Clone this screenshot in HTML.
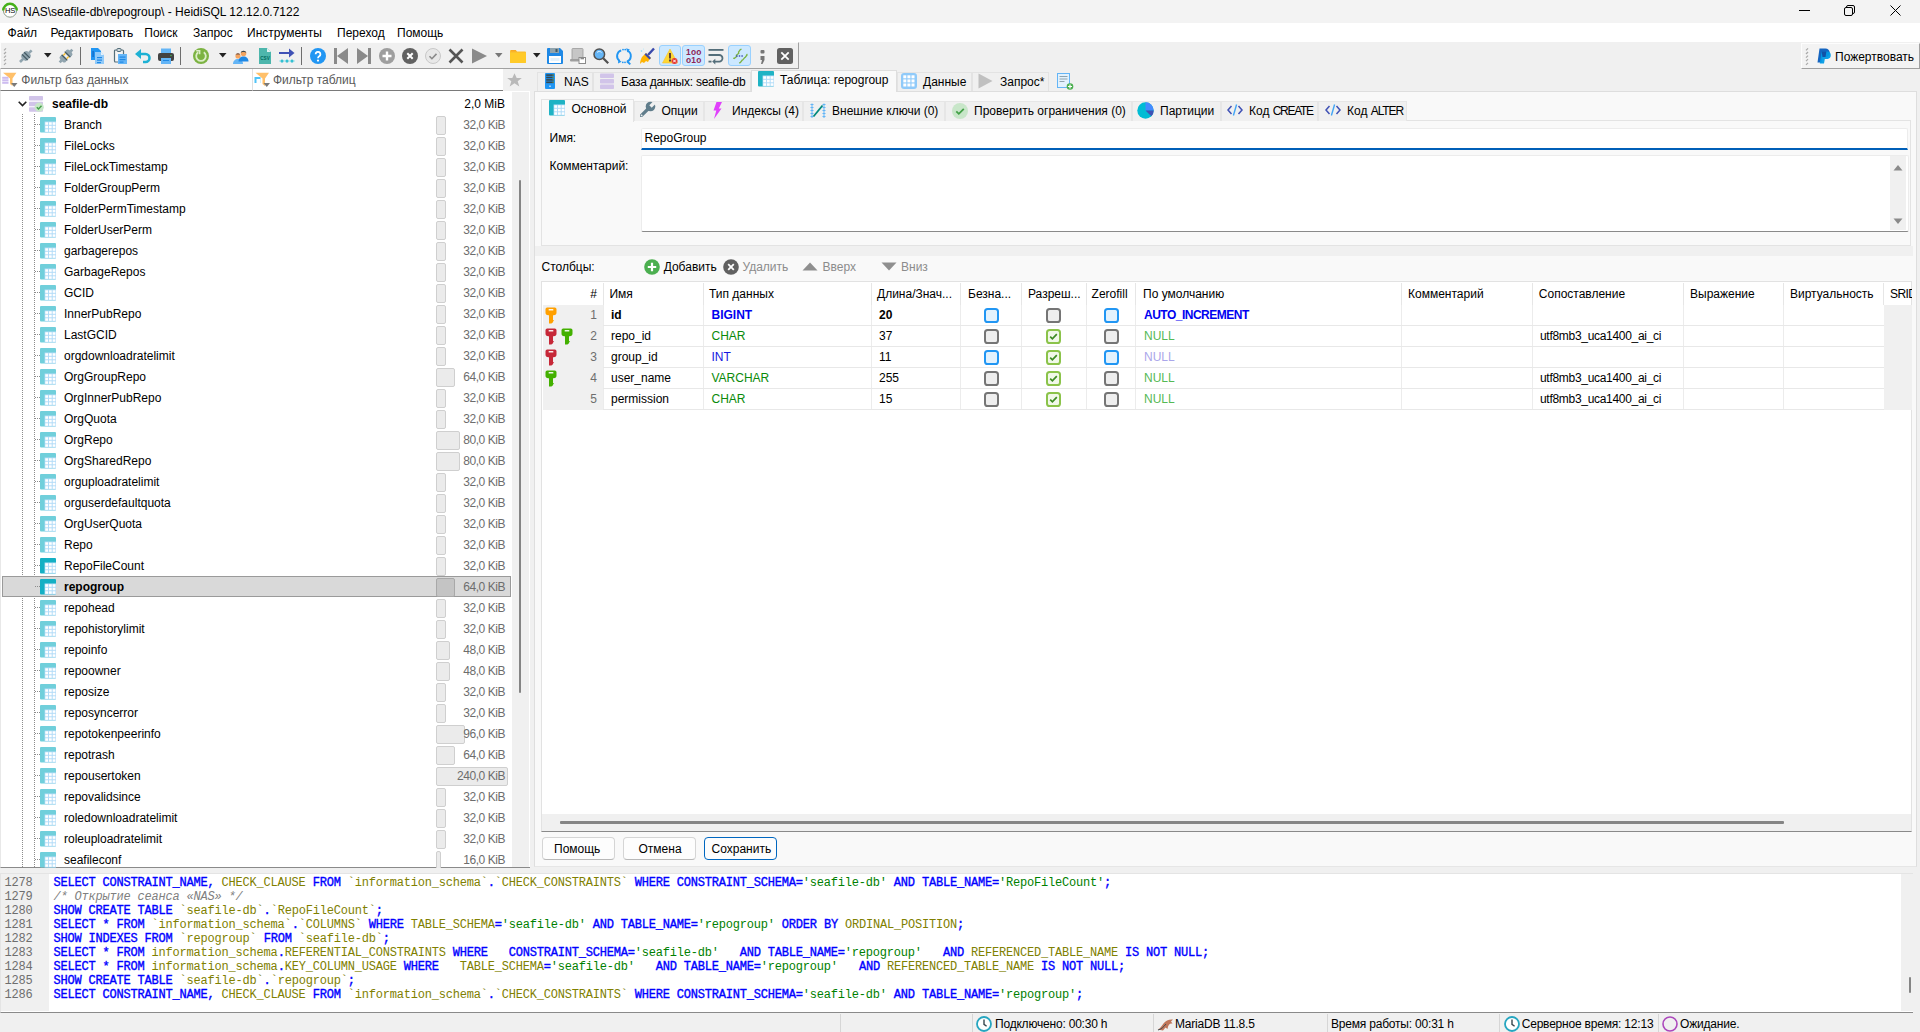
<!DOCTYPE html><html><head><meta charset="utf-8"><style>
*{margin:0;padding:0;box-sizing:border-box}
html,body{width:1920px;height:1032px;overflow:hidden;background:#f0f0f0}
body{position:relative;font-family:"Liberation Sans",sans-serif;font-size:12px;color:#000}
.t{position:absolute;white-space:nowrap;line-height:14px}
.r{position:absolute}
.ic{position:absolute;overflow:visible}
.b{font-weight:bold}
.mono{font-family:"Liberation Mono",monospace;font-size:12px;letter-spacing:-0.2px}
.kw{color:#0000ff;-webkit-text-stroke:0.35px #0000ff}
.id{color:#808000}
.st{color:#008000}
.cm{color:#808080;font-style:italic}
.sz{color:#6d6d6d}
</style></head><body>
<div class="r" style="left:0px;top:0px;width:1920px;height:23px;background:#f3f3f3"></div>
<svg class="ic" style="left:2px;top:3px" width="16" height="16" viewBox="0 0 16 16"><circle cx="8" cy="7.6" r="6.6" fill="#fff" stroke="#8a9a8a" stroke-width="1"/><path d="M1.2 7.6A6.8 6.8 0 0 1 14.8 7.6" fill="none" stroke="#45b018" stroke-width="2.4"/><text x="8" y="10.3" font-size="7.6" font-family="Liberation Sans" fill="#000" text-anchor="middle" letter-spacing="-0.3">HS</text></svg>
<div class="t " style="left:23px;top:5px;">NAS\seafile-db\repogroup\ - HeidiSQL 12.12.0.7122</div>
<div class="r" style="left:1799px;top:10px;width:11px;height:1px;background:#000"></div>
<svg class="ic" style="left:1844px;top:5px" width="11" height="11" viewBox="0 0 11 11"><rect x="0.5" y="2.5" width="8" height="8" rx="1.5" fill="none" stroke="#000"/><path d="M2.5 2.5V2a1.5 1.5 0 0 1 1.5-1.5h5A1.5 1.5 0 0 1 10.5 2v5A1.5 1.5 0 0 1 9 8.5h-.5" fill="none" stroke="#000"/></svg>
<svg class="ic" style="left:1890px;top:5px" width="11" height="11" viewBox="0 0 11 11"><path d="M0.5 0.5L10.5 10.5M10.5 0.5L0.5 10.5" stroke="#000" stroke-width="1"/></svg>
<div class="r" style="left:0px;top:23px;width:1920px;height:19px;background:#fff"></div>
<div class="t " style="left:7.6px;top:26px;">Файл</div>
<div class="t " style="left:50.4px;top:26px;">Редактировать</div>
<div class="t " style="left:144.3px;top:26px;">Поиск</div>
<div class="t " style="left:193px;top:26px;">Запрос</div>
<div class="t " style="left:247px;top:26px;">Инструменты</div>
<div class="t " style="left:337px;top:26px;">Переход</div>
<div class="t " style="left:397px;top:26px;">Помощь</div>
<div class="r" style="left:0px;top:42px;width:799px;height:27px;background:#f0f0f0;border-top:1px solid #fdfdfd;border-left:1px solid #fdfdfd;border-right:1px solid #a0a0a0;border-bottom:1px solid #a0a0a0"></div>
<svg class="ic" style="left:3px;top:47px" width="4" height="19" viewBox="0 0 4 19"><path d="M1 3.4L3 1.4" stroke="#a9a9a9" stroke-width="1.2"/><path d="M1 7.0L3 5.0" stroke="#a9a9a9" stroke-width="1.2"/><path d="M1 10.6L3 8.6" stroke="#a9a9a9" stroke-width="1.2"/><path d="M1 14.200000000000001L3 12.200000000000001" stroke="#a9a9a9" stroke-width="1.2"/><path d="M1 17.8L3 15.8" stroke="#a9a9a9" stroke-width="1.2"/></svg>
<svg class="ic" style="left:18px;top:48px" width="16" height="16" viewBox="0 0 16 16"><g transform="rotate(45 8 8)"><rect x="4" y="3.5" width="8" height="9" rx="3.2" fill="#90a4ae"/><rect x="6.7" y="0" width="2.6" height="4" fill="#90a4ae"/><rect x="6.7" y="12" width="2.6" height="4.5" fill="#90a4ae"/><rect x="4" y="6" width="8" height="1.3" fill="#455a64"/><rect x="4" y="9" width="8" height="1.3" fill="#455a64"/></g></svg>
<svg class="ic" style="left:44px;top:53px" width="8" height="5" viewBox="0 0 8 5"><path d="M0 0H7.5L3.75 4.5Z" fill="#222"/></svg>
<svg class="ic" style="left:58px;top:48px" width="16" height="16" viewBox="0 0 16 16"><g transform="rotate(45 8 8)"><rect x="4" y="1.5" width="8" height="5" rx="2.4" fill="#90a4ae"/><rect x="4" y="9.5" width="8" height="5" rx="2.4" fill="#90a4ae"/><rect x="6.7" y="-1" width="2.6" height="3" fill="#90a4ae"/><rect x="6.7" y="14" width="2.6" height="3" fill="#90a4ae"/><rect x="5" y="6.5" width="1.4" height="3" fill="#fbc02d"/><rect x="9.6" y="6.5" width="1.4" height="3" fill="#fbc02d"/><rect x="4" y="5.2" width="8" height="1.3" fill="#455a64"/><rect x="4" y="9.5" width="8" height="1.3" fill="#455a64"/></g></svg>
<div class="r" style="left:80px;top:47px;width:1px;height:18px;background:#6e6e6e"></div>
<svg class="ic" style="left:90px;top:48px" width="16" height="16" viewBox="0 0 16 16"><path d="M1 0h7l3 3v9H1z" fill="#2196f3"/><path d="M5 4h6l3 3v9H5z" fill="#90caf9"/><path d="M11 4l3 3h-3z" fill="#e3f2fd"/><rect x="7" y="9" width="5" height="1.2" fill="#1e88e5"/><rect x="7" y="11.5" width="5" height="1.2" fill="#1e88e5"/><rect x="7" y="14" width="4" height="1.2" fill="#1e88e5"/><rect x="2.5" y="3" width="1.2" height="6" fill="#1565c0"/></svg>
<svg class="ic" style="left:113px;top:48px" width="16" height="16" viewBox="0 0 16 16"><rect x="1.5" y="2" width="9" height="12" rx="1" fill="#f5f5f5" stroke="#546e7a" stroke-width="1.2"/><rect x="4" y="0.5" width="4" height="3" rx="0.8" fill="#cfd8dc" stroke="#546e7a" stroke-width="1"/><rect x="5" y="6" width="9" height="10" fill="#64b5f6"/><rect x="6.5" y="8.5" width="6" height="1.2" fill="#1e88e5"/><rect x="6.5" y="11" width="6" height="1.2" fill="#1e88e5"/><rect x="6.5" y="13.5" width="4" height="1.2" fill="#1e88e5"/></svg>
<svg class="ic" style="left:135px;top:48px" width="16" height="16" viewBox="0 0 16 16"><path d="M5 6h5.5a4 4 0 0 1 0 8H8" fill="none" stroke="#1eb1d4" stroke-width="2.6"/><path d="M0 6L6 1V11Z" fill="#1eb1d4"/></svg>
<svg class="ic" style="left:158px;top:48px" width="16" height="16" viewBox="0 0 16 16"><rect x="3" y="0.5" width="10" height="5" fill="#64b5f6"/><rect x="0" y="5" width="16" height="8" rx="2" fill="#424242"/><rect x="3" y="10" width="10" height="6" fill="#64b5f6"/><rect x="5" y="12" width="6" height="1" fill="#1e88e5"/><circle cx="13" cy="7.5" r="0.8" fill="#4caf50"/></svg>
<div class="r" style="left:180px;top:47px;width:1px;height:18px;background:#6e6e6e"></div>
<svg class="ic" style="left:193px;top:48px" width="16" height="16" viewBox="0 0 16 16"><circle cx="8" cy="8" r="8" fill="#7cb342"/><path d="M5.2 4.2A4.8 4.8 0 1 0 10.8 4.2" fill="none" stroke="#dcedc8" stroke-width="1.8"/><path d="M3.2 2.8h3.4v3.4" fill="none" stroke="#dcedc8" stroke-width="1.6"/></svg>
<svg class="ic" style="left:218.5px;top:53px" width="8" height="5" viewBox="0 0 8 5"><path d="M0 0H7.5L3.75 4.5Z" fill="#222"/></svg>
<svg class="ic" style="left:233px;top:48px" width="16" height="16" viewBox="0 0 16 16"><circle cx="5" cy="8" r="2.6" fill="#f4a460"/><path d="M4.6 5.2a2.7 2.7 0 0 1 2.6 1.4H2.4a2.7 2.7 0 0 1 2.2-1.4z" fill="#6d4c41"/><path d="M0 16c0-3 2-5 5-5s5 2 5 5z" fill="#64b5f6"/><circle cx="10.5" cy="5.5" r="2.8" fill="#f4a460"/><path d="M7.6 5a3 3 0 0 1 5.8 0c-.8-.8-1.8-1-2.9-1s-2.1.2-2.9 1z" fill="#37474f"/><path d="M5.5 13.5c0-3 2-5 5-5s5 2 5 5z" fill="#1e88e5"/></svg>
<svg class="ic" style="left:258px;top:48px" width="13" height="16" viewBox="0 0 13 16"><path d="M1 0h8l4 4v12H1z" fill="#4db6ac"/><path d="M9 0l4 4H9z" fill="#e0f2f1"/><text x="7" y="12" font-size="4.6" font-weight="bold" font-family="Liberation Sans" fill="#00695c" text-anchor="middle">CSV</text></svg>
<svg class="ic" style="left:279px;top:48px" width="16" height="16" viewBox="0 0 16 16"><rect x="0" y="4" width="12" height="2" fill="#3f51b5"/><path d="M10 0.5L15.5 5L10 9.5Z" fill="#3f51b5"/><circle cx="3" cy="13" r="1.5" fill="#00acc1"/><circle cx="8" cy="13" r="1.5" fill="#00acc1"/><circle cx="13" cy="13" r="1.5" fill="#00acc1"/><rect x="0" y="12.6" width="16" height="0.8" fill="#80deea"/></svg>
<div class="r" style="left:301px;top:47px;width:1px;height:18px;background:#6e6e6e"></div>
<svg class="ic" style="left:310px;top:48px" width="16" height="16" viewBox="0 0 16 16"><circle cx="8" cy="8" r="8" fill="#2196f3"/><path d="M5.6 6.2a2.4 2.4 0 1 1 3.6 2.1c-.8.5-1.2.9-1.2 1.9" fill="none" stroke="#fff" stroke-width="1.8"/><circle cx="8" cy="12.6" r="1.1" fill="#fff"/></svg>
<svg class="ic" style="left:334px;top:48px" width="14" height="16" viewBox="0 0 14 16"><rect x="0" y="0" width="3" height="16" fill="#8a8a8a"/><path d="M14 0V16L3 8Z" fill="#8a8a8a"/></svg>
<svg class="ic" style="left:357px;top:48px" width="14" height="16" viewBox="0 0 14 16"><rect x="11" y="0" width="3" height="16" fill="#8a8a8a"/><path d="M0 0V16L11 8Z" fill="#8a8a8a"/></svg>
<svg class="ic" style="left:379px;top:48px" width="16" height="16" viewBox="0 0 16 16"><circle cx="8" cy="8" r="8" fill="#9e9e9e"/><path d="M8 3.5v9M3.5 8h9" stroke="#fff" stroke-width="2.4"/></svg>
<svg class="ic" style="left:402px;top:48px" width="16" height="16" viewBox="0 0 16 16"><circle cx="8" cy="8" r="8" fill="#616161"/><path d="M5.3 5.3l5.4 5.4M10.7 5.3l-5.4 5.4" stroke="#fff" stroke-width="2"/></svg>
<svg class="ic" style="left:425px;top:48px" width="16" height="16" viewBox="0 0 16 16"><circle cx="8" cy="8" r="7.5" fill="#e8e8e8" stroke="#c8c8c8" stroke-width="1"/><path d="M4.5 8.3l2.4 2.4 4.6-4.8" fill="none" stroke="#8a8a8a" stroke-width="1.6"/></svg>
<svg class="ic" style="left:448px;top:48px" width="16" height="16" viewBox="0 0 16 16"><path d="M1.5 1.5l13 13M14.5 1.5l-13 13" stroke="#555" stroke-width="2.6"/></svg>
<svg class="ic" style="left:472px;top:48px" width="16" height="16" viewBox="0 0 16 16"><path d="M0 0.5L15 8L0 15.5Z" fill="#8a8a8a"/></svg>
<svg class="ic" style="left:495px;top:53px" width="8" height="5" viewBox="0 0 8 5"><path d="M0 0H7.5L3.75 4.5Z" fill="#777"/></svg>
<svg class="ic" style="left:510px;top:48px" width="16" height="16" viewBox="0 0 16 16"><path d="M0 3a1 1 0 0 1 1-1h4.5l1.5 1.5H15a1 1 0 0 1 1 1V14a1 1 0 0 1-1 1H1a1 1 0 0 1-1-1z" fill="#fbc02d"/><path d="M0 5h16v9a1 1 0 0 1-1 1H1a1 1 0 0 1-1-1z" fill="#ffca28"/><path d="M1 2h4.5L7 3.5H1z" fill="#f9a825"/></svg>
<svg class="ic" style="left:533px;top:53px" width="8" height="5" viewBox="0 0 8 5"><path d="M0 0H7.5L3.75 4.5Z" fill="#222"/></svg>
<svg class="ic" style="left:547px;top:48px" width="16" height="16" viewBox="0 0 16 16"><path d="M0 1a1 1 0 0 1 1-1h12l3 3v12a1 1 0 0 1-1 1H1a1 1 0 0 1-1-1z" fill="#1e88e5"/><rect x="3" y="0" width="9" height="5" fill="#90a4ae"/><rect x="8.5" y="1" width="2" height="3" fill="#455a64"/><rect x="2" y="8" width="12" height="7" fill="#fff"/><rect x="3.5" y="10" width="9" height="3" fill="#e3f2fd"/></svg>
<svg class="ic" style="left:570px;top:48px" width="16" height="16" viewBox="0 0 16 16"><rect x="2" y="0.5" width="11" height="12" rx="0.8" fill="#c6c6c6" stroke="#9a9a9a" stroke-width="0.8"/><rect x="0" y="11" width="9" height="2.5" rx="1" fill="#9e9e9e"/><rect x="9" y="9.5" width="6.5" height="6" fill="#fff" stroke="#8a8a8a" stroke-width="1"/><rect x="10.5" y="9.5" width="3.5" height="1.8" fill="#8a8a8a"/></svg>
<svg class="ic" style="left:593px;top:48px" width="16" height="16" viewBox="0 0 16 16"><circle cx="6.3" cy="6.3" r="5.3" fill="#64b5f6" stroke="#505050" stroke-width="1.5"/><path d="M10.2 10.2L15.2 15.2" stroke="#505050" stroke-width="2.2"/><path d="M4 4.5a3 3 0 0 1 4.5 0" stroke="#e3f2fd" stroke-width="1" fill="none"/></svg>
<svg class="ic" style="left:616px;top:48px" width="16" height="16" viewBox="0 0 16 16"><path d="M5.2 2.4A6 6 0 0 0 3.6 13" fill="none" stroke="#2196f3" stroke-width="1.9"/><path d="M11 13.6A6 6 0 0 0 11.8 2.8" fill="none" stroke="#2196f3" stroke-width="1.9"/><circle cx="7" cy="1.6" r="0.9" fill="#2196f3"/><circle cx="9.2" cy="1.6" r="0.9" fill="#2196f3"/><circle cx="6.8" cy="14.3" r="0.9" fill="#2196f3"/><circle cx="9" cy="14.3" r="0.9" fill="#2196f3"/><path d="M10.2 0.2L13.8 1.6 11.2 4.6Z" fill="#2196f3"/><path d="M2 15.6L2.4 11.6 5.6 13.8Z" fill="#2196f3"/><path d="M11 13.2L14.3 16.4" stroke="#2196f3" stroke-width="1.9"/></svg>
<svg class="ic" style="left:639px;top:48px" width="16" height="16" viewBox="0 0 16 16"><path d="M9 7L15 0.5" stroke="#3949ab" stroke-width="2.4"/><path d="M7 5l5 5-2 2-1 2-2-1-2 2-2-1-2 2c0-3 1-5 2-7z" fill="#ffb300"/><path d="M7 5l5 5-1.5 1.5-5-5z" fill="#3949ab"/><circle cx="2.5" cy="3" r="0.8" fill="#81d4fa"/><circle cx="4.5" cy="1" r="0.6" fill="#b3e5fc"/></svg>
<div class="r" style="left:659px;top:45px;width:22px;height:21px;background:#cce8ff;border:1px solid #99d1ff;border-radius:3px"></div>
<svg class="ic" style="left:662px;top:48px" width="16" height="16" viewBox="0 0 16 16"><path d="M8 1L15.5 15H0.5Z" fill="#fdd835" stroke="#fbc02d" stroke-width="0.6" stroke-linejoin="round"/><rect x="7" y="5" width="2" height="5.5" fill="#5d4037"/><rect x="7" y="11.5" width="2" height="2" fill="#5d4037"/><circle cx="12.5" cy="13" r="3" fill="#e53935"/><path d="M11.2 11.7l2.6 2.6M13.8 11.7l-2.6 2.6" stroke="#fff" stroke-width="1"/></svg>
<div class="r" style="left:682px;top:45px;width:23px;height:21px;background:#cce8ff;border:1px solid #99d1ff;border-radius:3px"></div>
<svg class="ic" style="left:685px;top:47px" width="17" height="17" viewBox="0 0 17 17"><text x="8.8" y="8" font-size="8.4" font-weight="bold" font-family="Liberation Sans" fill="#8e2456" text-anchor="middle" letter-spacing="0.2">1oo</text><text x="8.8" y="16.3" font-size="8.4" font-weight="bold" font-family="Liberation Sans" fill="#8e2456" text-anchor="middle" letter-spacing="0.2">o1o</text></svg>
<svg class="ic" style="left:708px;top:48px" width="16" height="16" viewBox="0 0 16 16"><rect x="0.5" y="1" width="15" height="1.8" fill="#546e7a"/><path d="M0.5 7h10.7a3.3 3.3 0 0 1 0 6.6H6" fill="none" stroke="#546e7a" stroke-width="1.8"/><path d="M7.3 10.8L4.2 13.6L7.3 16.4Z" fill="#546e7a"/><rect x="0.5" y="12.7" width="3" height="1.8" fill="#546e7a"/></svg>
<div class="r" style="left:728px;top:45px;width:23px;height:21px;background:#cce8ff;border:1px solid #99d1ff;border-radius:3px"></div>
<svg class="ic" style="left:732px;top:48px" width="16" height="16" viewBox="0 0 16 16"><path d="M9.5 1.2L8.3 1.6 6.5 4.2 6.8 5.2 4.3 7.2 4.6 8.4 2.2 10.5 1.2 10.2" fill="none" stroke="#7cb342" stroke-width="1.3" stroke-linejoin="round"/><path d="M14.8 5.8L15 7 13.2 9.4 12.7 9.6 10.8 11.8 10.3 12 8.3 14.7 7 14.8" fill="none" stroke="#7cb342" stroke-width="1.3" stroke-linejoin="round"/><path d="M4.2 8h1.4M6.8 8h1.4M9.4 8h1.4" stroke="#3f51b5" stroke-width="1.3"/></svg>
<svg class="ic" style="left:760px;top:48px" width="6" height="16" viewBox="0 0 6 16"><rect x="0.5" y="2" width="4" height="3.5" rx="1" fill="#757575"/><path d="M0.5 8h4v4l-2 4h-1.5l1-4h-1.5z" fill="#757575"/></svg>
<svg class="ic" style="left:777px;top:48px" width="16" height="16" viewBox="0 0 16 16"><rect x="0" y="0" width="16" height="16" rx="2.5" fill="#616161"/><path d="M4.3 4.3l7.4 7.4M11.7 4.3l-7.4 7.4" stroke="#fff" stroke-width="1.8"/></svg>
<div class="r" style="left:1801px;top:43px;width:119px;height:26px;background:#f3f3f3;border-top:1px solid #fdfdfd;border-left:1px solid #fdfdfd;border-bottom:1px solid #a0a0a0;border-right:1px solid #a0a0a0"></div>
<svg class="ic" style="left:1805px;top:47px" width="4" height="19" viewBox="0 0 4 19"><path d="M1 3.4L3 1.4" stroke="#a9a9a9" stroke-width="1.2"/><path d="M1 7.0L3 5.0" stroke="#a9a9a9" stroke-width="1.2"/><path d="M1 10.6L3 8.6" stroke="#a9a9a9" stroke-width="1.2"/><path d="M1 14.200000000000001L3 12.200000000000001" stroke="#a9a9a9" stroke-width="1.2"/><path d="M1 17.8L3 15.8" stroke="#a9a9a9" stroke-width="1.2"/></svg>
<svg class="ic" style="left:1815px;top:48px" width="16" height="16" viewBox="0 0 16 16"><path d="M4.5 0.5h6a4 4 0 0 1 0 8.5H7.5L6.6 14.5H2.5z" fill="#1565c0"/><path d="M6.6 3.5h6a3.8 3.8 0 0 1 0 7.5H9.8L9 15.5H4.8z" fill="#039be5" opacity="0.95"/><path d="M6.6 3.5h4.8l-0.9 5.5H7.5z" fill="#1a237e" opacity="0.6"/></svg>
<div class="t " style="left:1835px;top:50px;">Пожертвовать</div>
<div class="r" style="left:0px;top:69px;width:252px;height:22px;background:#fff;border-bottom:1px solid #7a7a7a;border-left:1px solid #e0e0e0"></div>
<div class="r" style="left:252px;top:69px;width:251px;height:22px;background:#fff;border-bottom:1px solid #7a7a7a;border-left:1px solid #e0e0e0"></div>
<svg class="ic" style="left:2px;top:72px" width="16" height="17" viewBox="0 0 16 17"><path d="M1 0.8H14.4L10.5 6.5V14L8 12V6.5Z" fill="#ffc06a"/><rect x="0.2" y="4.8" width="6.3" height="2" fill="#cdbcf0"/><rect x="0.2" y="7.3" width="6.3" height="2" fill="#cdbcf0"/><rect x="0.2" y="9.8" width="6.3" height="2" fill="#cdbcf0"/><path d="M9 11H15.5L12.25 15Z" fill="#7a7a7a"/></svg>
<div class="t " style="left:21.3px;top:73.3px;color:#5a5a5a">Фильтр баз данных</div>
<svg class="ic" style="left:254px;top:72px" width="17" height="17" viewBox="0 0 17 17"><path d="M1.5 0.8H15L11 6.5V14L8.5 12V6.5Z" fill="#ffc06a"/><rect x="0.5" y="5" width="6" height="6" fill="#4fc3f7"/><rect x="2.5" y="7" width="4" height="4" fill="#fff"/><path d="M9.5 11H16L12.75 15Z" fill="#7a7a7a"/></svg>
<div class="t " style="left:273px;top:73.3px;color:#5a5a5a">Фильтр таблиц</div>
<svg class="ic" style="left:507px;top:73px" width="15" height="14" viewBox="0 0 15 14"><path d="M7.5 0.3L9.7 5H14.8L10.7 8.2L12.3 13.5L7.5 10.3L2.7 13.5L4.3 8.2L0.2 5H5.3Z" fill="#b9b9b9"/></svg>
<div class="r" style="left:0px;top:91px;width:530px;height:777px;background:#fff;border-left:1px solid #e8e8e8;border-bottom:1px solid #8a8a8a"></div>
<div class="r" style="left:512px;top:92px;width:17px;height:775px;background:#f0f0f0"></div>
<div class="r" style="left:519px;top:180px;width:2px;height:513px;background:#858585;border-radius:1px"></div>
<svg class="ic" style="left:18px;top:101px" width="9" height="6" viewBox="0 0 9 6"><path d="M0.7 0.7L4.5 4.5L8.3 0.7" fill="none" stroke="#222" stroke-width="1.6"/></svg>
<svg class="ic" style="left:29px;top:96px" width="15" height="16" viewBox="0 0 15 16"><rect x="0" y="0" width="14" height="4.5" rx="0.8" fill="#d1c4e9"/><rect x="0" y="5.8" width="14" height="4.5" rx="0.8" fill="#d1c4e9"/><rect x="0" y="11.3" width="14" height="4.5" rx="0.8" fill="#d1c4e9"/><circle cx="10.2" cy="11.2" r="4.6" fill="#c8e6c9"/><path d="M7.8 11.3l1.7 1.7 3-3.2" fill="none" stroke="#43a047" stroke-width="1.4"/></svg>
<div class="t b" style="left:52px;top:96.5px;">seafile-db</div>
<div class="t " style="left:0px;top:96.5px;left:auto;right:1415px">2,0 MiB</div>
<svg class="ic" style="left:22px;top:114px" width="1" height="753" viewBox="0 0 1 753"><path d="M0.5 0V753" stroke="#8c8c8c" stroke-width="1" stroke-dasharray="1 1"/></svg>
<svg class="ic" style="left:34px;top:114px" width="1" height="753" viewBox="0 0 1 753"><path d="M0.5 0V753" stroke="#8c8c8c" stroke-width="1" stroke-dasharray="1 1"/></svg>
<svg class="ic" style="left:35px;top:124px" width="5" height="1" viewBox="0 0 5 1"><path d="M0 0.5H5" stroke="#8c8c8c" stroke-dasharray="1 1"/></svg>
<svg class="ic" style="left:40px;top:117px" width="16" height="16" viewBox="0 0 16 16"><rect x="0" y="0" width="16" height="15.5" rx="1" fill="#70cfdb"/><rect x="4.6" y="4.5" width="11.4" height="11" fill="#b3dcf8"/><rect x="5.3" y="5.3" width="2.7" height="2.5" fill="#fff"/><rect x="9.0" y="5.3" width="2.7" height="2.5" fill="#fff"/><rect x="12.7" y="5.3" width="2.7" height="2.5" fill="#fff"/><rect x="5.3" y="8.8" width="2.7" height="2.5" fill="#fff"/><rect x="9.0" y="8.8" width="2.7" height="2.5" fill="#fff"/><rect x="12.7" y="8.8" width="2.7" height="2.5" fill="#fff"/><rect x="5.3" y="12.3" width="2.7" height="2.5" fill="#fff"/><rect x="9.0" y="12.3" width="2.7" height="2.5" fill="#fff"/><rect x="12.7" y="12.3" width="2.7" height="2.5" fill="#fff"/></svg>
<div class="t " style="left:64px;top:117.80000000000001px;">Branch</div>
<div class="r" style="left:436px;top:116px;width:10px;height:19px;background:#ebebeb;border:1px solid #cfcfcf;border-radius:2px"></div>
<div class="t sz" style="left:0px;top:117.80000000000001px;left:auto;right:1415px;letter-spacing:-0.45px">32,0 KiB</div>
<svg class="ic" style="left:35px;top:145px" width="5" height="1" viewBox="0 0 5 1"><path d="M0 0.5H5" stroke="#8c8c8c" stroke-dasharray="1 1"/></svg>
<svg class="ic" style="left:40px;top:138px" width="16" height="16" viewBox="0 0 16 16"><rect x="0" y="0" width="16" height="15.5" rx="1" fill="#70cfdb"/><rect x="4.6" y="4.5" width="11.4" height="11" fill="#b3dcf8"/><rect x="5.3" y="5.3" width="2.7" height="2.5" fill="#fff"/><rect x="9.0" y="5.3" width="2.7" height="2.5" fill="#fff"/><rect x="12.7" y="5.3" width="2.7" height="2.5" fill="#fff"/><rect x="5.3" y="8.8" width="2.7" height="2.5" fill="#fff"/><rect x="9.0" y="8.8" width="2.7" height="2.5" fill="#fff"/><rect x="12.7" y="8.8" width="2.7" height="2.5" fill="#fff"/><rect x="5.3" y="12.3" width="2.7" height="2.5" fill="#fff"/><rect x="9.0" y="12.3" width="2.7" height="2.5" fill="#fff"/><rect x="12.7" y="12.3" width="2.7" height="2.5" fill="#fff"/></svg>
<div class="t " style="left:64px;top:138.8px;">FileLocks</div>
<div class="r" style="left:436px;top:137px;width:10px;height:19px;background:#ebebeb;border:1px solid #cfcfcf;border-radius:2px"></div>
<div class="t sz" style="left:0px;top:138.8px;left:auto;right:1415px;letter-spacing:-0.45px">32,0 KiB</div>
<svg class="ic" style="left:35px;top:166px" width="5" height="1" viewBox="0 0 5 1"><path d="M0 0.5H5" stroke="#8c8c8c" stroke-dasharray="1 1"/></svg>
<svg class="ic" style="left:40px;top:159px" width="16" height="16" viewBox="0 0 16 16"><rect x="0" y="0" width="16" height="15.5" rx="1" fill="#70cfdb"/><rect x="4.6" y="4.5" width="11.4" height="11" fill="#b3dcf8"/><rect x="5.3" y="5.3" width="2.7" height="2.5" fill="#fff"/><rect x="9.0" y="5.3" width="2.7" height="2.5" fill="#fff"/><rect x="12.7" y="5.3" width="2.7" height="2.5" fill="#fff"/><rect x="5.3" y="8.8" width="2.7" height="2.5" fill="#fff"/><rect x="9.0" y="8.8" width="2.7" height="2.5" fill="#fff"/><rect x="12.7" y="8.8" width="2.7" height="2.5" fill="#fff"/><rect x="5.3" y="12.3" width="2.7" height="2.5" fill="#fff"/><rect x="9.0" y="12.3" width="2.7" height="2.5" fill="#fff"/><rect x="12.7" y="12.3" width="2.7" height="2.5" fill="#fff"/></svg>
<div class="t " style="left:64px;top:159.8px;">FileLockTimestamp</div>
<div class="r" style="left:436px;top:158px;width:10px;height:19px;background:#ebebeb;border:1px solid #cfcfcf;border-radius:2px"></div>
<div class="t sz" style="left:0px;top:159.8px;left:auto;right:1415px;letter-spacing:-0.45px">32,0 KiB</div>
<svg class="ic" style="left:35px;top:187px" width="5" height="1" viewBox="0 0 5 1"><path d="M0 0.5H5" stroke="#8c8c8c" stroke-dasharray="1 1"/></svg>
<svg class="ic" style="left:40px;top:180px" width="16" height="16" viewBox="0 0 16 16"><rect x="0" y="0" width="16" height="15.5" rx="1" fill="#70cfdb"/><rect x="4.6" y="4.5" width="11.4" height="11" fill="#b3dcf8"/><rect x="5.3" y="5.3" width="2.7" height="2.5" fill="#fff"/><rect x="9.0" y="5.3" width="2.7" height="2.5" fill="#fff"/><rect x="12.7" y="5.3" width="2.7" height="2.5" fill="#fff"/><rect x="5.3" y="8.8" width="2.7" height="2.5" fill="#fff"/><rect x="9.0" y="8.8" width="2.7" height="2.5" fill="#fff"/><rect x="12.7" y="8.8" width="2.7" height="2.5" fill="#fff"/><rect x="5.3" y="12.3" width="2.7" height="2.5" fill="#fff"/><rect x="9.0" y="12.3" width="2.7" height="2.5" fill="#fff"/><rect x="12.7" y="12.3" width="2.7" height="2.5" fill="#fff"/></svg>
<div class="t " style="left:64px;top:180.8px;">FolderGroupPerm</div>
<div class="r" style="left:436px;top:179px;width:10px;height:19px;background:#ebebeb;border:1px solid #cfcfcf;border-radius:2px"></div>
<div class="t sz" style="left:0px;top:180.8px;left:auto;right:1415px;letter-spacing:-0.45px">32,0 KiB</div>
<svg class="ic" style="left:35px;top:208px" width="5" height="1" viewBox="0 0 5 1"><path d="M0 0.5H5" stroke="#8c8c8c" stroke-dasharray="1 1"/></svg>
<svg class="ic" style="left:40px;top:201px" width="16" height="16" viewBox="0 0 16 16"><rect x="0" y="0" width="16" height="15.5" rx="1" fill="#70cfdb"/><rect x="4.6" y="4.5" width="11.4" height="11" fill="#b3dcf8"/><rect x="5.3" y="5.3" width="2.7" height="2.5" fill="#fff"/><rect x="9.0" y="5.3" width="2.7" height="2.5" fill="#fff"/><rect x="12.7" y="5.3" width="2.7" height="2.5" fill="#fff"/><rect x="5.3" y="8.8" width="2.7" height="2.5" fill="#fff"/><rect x="9.0" y="8.8" width="2.7" height="2.5" fill="#fff"/><rect x="12.7" y="8.8" width="2.7" height="2.5" fill="#fff"/><rect x="5.3" y="12.3" width="2.7" height="2.5" fill="#fff"/><rect x="9.0" y="12.3" width="2.7" height="2.5" fill="#fff"/><rect x="12.7" y="12.3" width="2.7" height="2.5" fill="#fff"/></svg>
<div class="t " style="left:64px;top:201.8px;">FolderPermTimestamp</div>
<div class="r" style="left:436px;top:200px;width:10px;height:19px;background:#ebebeb;border:1px solid #cfcfcf;border-radius:2px"></div>
<div class="t sz" style="left:0px;top:201.8px;left:auto;right:1415px;letter-spacing:-0.45px">32,0 KiB</div>
<svg class="ic" style="left:35px;top:229px" width="5" height="1" viewBox="0 0 5 1"><path d="M0 0.5H5" stroke="#8c8c8c" stroke-dasharray="1 1"/></svg>
<svg class="ic" style="left:40px;top:222px" width="16" height="16" viewBox="0 0 16 16"><rect x="0" y="0" width="16" height="15.5" rx="1" fill="#70cfdb"/><rect x="4.6" y="4.5" width="11.4" height="11" fill="#b3dcf8"/><rect x="5.3" y="5.3" width="2.7" height="2.5" fill="#fff"/><rect x="9.0" y="5.3" width="2.7" height="2.5" fill="#fff"/><rect x="12.7" y="5.3" width="2.7" height="2.5" fill="#fff"/><rect x="5.3" y="8.8" width="2.7" height="2.5" fill="#fff"/><rect x="9.0" y="8.8" width="2.7" height="2.5" fill="#fff"/><rect x="12.7" y="8.8" width="2.7" height="2.5" fill="#fff"/><rect x="5.3" y="12.3" width="2.7" height="2.5" fill="#fff"/><rect x="9.0" y="12.3" width="2.7" height="2.5" fill="#fff"/><rect x="12.7" y="12.3" width="2.7" height="2.5" fill="#fff"/></svg>
<div class="t " style="left:64px;top:222.8px;">FolderUserPerm</div>
<div class="r" style="left:436px;top:221px;width:10px;height:19px;background:#ebebeb;border:1px solid #cfcfcf;border-radius:2px"></div>
<div class="t sz" style="left:0px;top:222.8px;left:auto;right:1415px;letter-spacing:-0.45px">32,0 KiB</div>
<svg class="ic" style="left:35px;top:250px" width="5" height="1" viewBox="0 0 5 1"><path d="M0 0.5H5" stroke="#8c8c8c" stroke-dasharray="1 1"/></svg>
<svg class="ic" style="left:40px;top:243px" width="16" height="16" viewBox="0 0 16 16"><rect x="0" y="0" width="16" height="15.5" rx="1" fill="#70cfdb"/><rect x="4.6" y="4.5" width="11.4" height="11" fill="#b3dcf8"/><rect x="5.3" y="5.3" width="2.7" height="2.5" fill="#fff"/><rect x="9.0" y="5.3" width="2.7" height="2.5" fill="#fff"/><rect x="12.7" y="5.3" width="2.7" height="2.5" fill="#fff"/><rect x="5.3" y="8.8" width="2.7" height="2.5" fill="#fff"/><rect x="9.0" y="8.8" width="2.7" height="2.5" fill="#fff"/><rect x="12.7" y="8.8" width="2.7" height="2.5" fill="#fff"/><rect x="5.3" y="12.3" width="2.7" height="2.5" fill="#fff"/><rect x="9.0" y="12.3" width="2.7" height="2.5" fill="#fff"/><rect x="12.7" y="12.3" width="2.7" height="2.5" fill="#fff"/></svg>
<div class="t " style="left:64px;top:243.8px;">garbagerepos</div>
<div class="r" style="left:436px;top:242px;width:10px;height:19px;background:#ebebeb;border:1px solid #cfcfcf;border-radius:2px"></div>
<div class="t sz" style="left:0px;top:243.8px;left:auto;right:1415px;letter-spacing:-0.45px">32,0 KiB</div>
<svg class="ic" style="left:35px;top:271px" width="5" height="1" viewBox="0 0 5 1"><path d="M0 0.5H5" stroke="#8c8c8c" stroke-dasharray="1 1"/></svg>
<svg class="ic" style="left:40px;top:264px" width="16" height="16" viewBox="0 0 16 16"><rect x="0" y="0" width="16" height="15.5" rx="1" fill="#70cfdb"/><rect x="4.6" y="4.5" width="11.4" height="11" fill="#b3dcf8"/><rect x="5.3" y="5.3" width="2.7" height="2.5" fill="#fff"/><rect x="9.0" y="5.3" width="2.7" height="2.5" fill="#fff"/><rect x="12.7" y="5.3" width="2.7" height="2.5" fill="#fff"/><rect x="5.3" y="8.8" width="2.7" height="2.5" fill="#fff"/><rect x="9.0" y="8.8" width="2.7" height="2.5" fill="#fff"/><rect x="12.7" y="8.8" width="2.7" height="2.5" fill="#fff"/><rect x="5.3" y="12.3" width="2.7" height="2.5" fill="#fff"/><rect x="9.0" y="12.3" width="2.7" height="2.5" fill="#fff"/><rect x="12.7" y="12.3" width="2.7" height="2.5" fill="#fff"/></svg>
<div class="t " style="left:64px;top:264.8px;">GarbageRepos</div>
<div class="r" style="left:436px;top:263px;width:10px;height:19px;background:#ebebeb;border:1px solid #cfcfcf;border-radius:2px"></div>
<div class="t sz" style="left:0px;top:264.8px;left:auto;right:1415px;letter-spacing:-0.45px">32,0 KiB</div>
<svg class="ic" style="left:35px;top:292px" width="5" height="1" viewBox="0 0 5 1"><path d="M0 0.5H5" stroke="#8c8c8c" stroke-dasharray="1 1"/></svg>
<svg class="ic" style="left:40px;top:285px" width="16" height="16" viewBox="0 0 16 16"><rect x="0" y="0" width="16" height="15.5" rx="1" fill="#70cfdb"/><rect x="4.6" y="4.5" width="11.4" height="11" fill="#b3dcf8"/><rect x="5.3" y="5.3" width="2.7" height="2.5" fill="#fff"/><rect x="9.0" y="5.3" width="2.7" height="2.5" fill="#fff"/><rect x="12.7" y="5.3" width="2.7" height="2.5" fill="#fff"/><rect x="5.3" y="8.8" width="2.7" height="2.5" fill="#fff"/><rect x="9.0" y="8.8" width="2.7" height="2.5" fill="#fff"/><rect x="12.7" y="8.8" width="2.7" height="2.5" fill="#fff"/><rect x="5.3" y="12.3" width="2.7" height="2.5" fill="#fff"/><rect x="9.0" y="12.3" width="2.7" height="2.5" fill="#fff"/><rect x="12.7" y="12.3" width="2.7" height="2.5" fill="#fff"/></svg>
<div class="t " style="left:64px;top:285.8px;">GCID</div>
<div class="r" style="left:436px;top:284px;width:10px;height:19px;background:#ebebeb;border:1px solid #cfcfcf;border-radius:2px"></div>
<div class="t sz" style="left:0px;top:285.8px;left:auto;right:1415px;letter-spacing:-0.45px">32,0 KiB</div>
<svg class="ic" style="left:35px;top:313px" width="5" height="1" viewBox="0 0 5 1"><path d="M0 0.5H5" stroke="#8c8c8c" stroke-dasharray="1 1"/></svg>
<svg class="ic" style="left:40px;top:306px" width="16" height="16" viewBox="0 0 16 16"><rect x="0" y="0" width="16" height="15.5" rx="1" fill="#70cfdb"/><rect x="4.6" y="4.5" width="11.4" height="11" fill="#b3dcf8"/><rect x="5.3" y="5.3" width="2.7" height="2.5" fill="#fff"/><rect x="9.0" y="5.3" width="2.7" height="2.5" fill="#fff"/><rect x="12.7" y="5.3" width="2.7" height="2.5" fill="#fff"/><rect x="5.3" y="8.8" width="2.7" height="2.5" fill="#fff"/><rect x="9.0" y="8.8" width="2.7" height="2.5" fill="#fff"/><rect x="12.7" y="8.8" width="2.7" height="2.5" fill="#fff"/><rect x="5.3" y="12.3" width="2.7" height="2.5" fill="#fff"/><rect x="9.0" y="12.3" width="2.7" height="2.5" fill="#fff"/><rect x="12.7" y="12.3" width="2.7" height="2.5" fill="#fff"/></svg>
<div class="t " style="left:64px;top:306.8px;">InnerPubRepo</div>
<div class="r" style="left:436px;top:305px;width:10px;height:19px;background:#ebebeb;border:1px solid #cfcfcf;border-radius:2px"></div>
<div class="t sz" style="left:0px;top:306.8px;left:auto;right:1415px;letter-spacing:-0.45px">32,0 KiB</div>
<svg class="ic" style="left:35px;top:334px" width="5" height="1" viewBox="0 0 5 1"><path d="M0 0.5H5" stroke="#8c8c8c" stroke-dasharray="1 1"/></svg>
<svg class="ic" style="left:40px;top:327px" width="16" height="16" viewBox="0 0 16 16"><rect x="0" y="0" width="16" height="15.5" rx="1" fill="#70cfdb"/><rect x="4.6" y="4.5" width="11.4" height="11" fill="#b3dcf8"/><rect x="5.3" y="5.3" width="2.7" height="2.5" fill="#fff"/><rect x="9.0" y="5.3" width="2.7" height="2.5" fill="#fff"/><rect x="12.7" y="5.3" width="2.7" height="2.5" fill="#fff"/><rect x="5.3" y="8.8" width="2.7" height="2.5" fill="#fff"/><rect x="9.0" y="8.8" width="2.7" height="2.5" fill="#fff"/><rect x="12.7" y="8.8" width="2.7" height="2.5" fill="#fff"/><rect x="5.3" y="12.3" width="2.7" height="2.5" fill="#fff"/><rect x="9.0" y="12.3" width="2.7" height="2.5" fill="#fff"/><rect x="12.7" y="12.3" width="2.7" height="2.5" fill="#fff"/></svg>
<div class="t " style="left:64px;top:327.8px;">LastGCID</div>
<div class="r" style="left:436px;top:326px;width:10px;height:19px;background:#ebebeb;border:1px solid #cfcfcf;border-radius:2px"></div>
<div class="t sz" style="left:0px;top:327.8px;left:auto;right:1415px;letter-spacing:-0.45px">32,0 KiB</div>
<svg class="ic" style="left:35px;top:355px" width="5" height="1" viewBox="0 0 5 1"><path d="M0 0.5H5" stroke="#8c8c8c" stroke-dasharray="1 1"/></svg>
<svg class="ic" style="left:40px;top:348px" width="16" height="16" viewBox="0 0 16 16"><rect x="0" y="0" width="16" height="15.5" rx="1" fill="#70cfdb"/><rect x="4.6" y="4.5" width="11.4" height="11" fill="#b3dcf8"/><rect x="5.3" y="5.3" width="2.7" height="2.5" fill="#fff"/><rect x="9.0" y="5.3" width="2.7" height="2.5" fill="#fff"/><rect x="12.7" y="5.3" width="2.7" height="2.5" fill="#fff"/><rect x="5.3" y="8.8" width="2.7" height="2.5" fill="#fff"/><rect x="9.0" y="8.8" width="2.7" height="2.5" fill="#fff"/><rect x="12.7" y="8.8" width="2.7" height="2.5" fill="#fff"/><rect x="5.3" y="12.3" width="2.7" height="2.5" fill="#fff"/><rect x="9.0" y="12.3" width="2.7" height="2.5" fill="#fff"/><rect x="12.7" y="12.3" width="2.7" height="2.5" fill="#fff"/></svg>
<div class="t " style="left:64px;top:348.8px;">orgdownloadratelimit</div>
<div class="r" style="left:436px;top:347px;width:10px;height:19px;background:#ebebeb;border:1px solid #cfcfcf;border-radius:2px"></div>
<div class="t sz" style="left:0px;top:348.8px;left:auto;right:1415px;letter-spacing:-0.45px">32,0 KiB</div>
<svg class="ic" style="left:35px;top:376px" width="5" height="1" viewBox="0 0 5 1"><path d="M0 0.5H5" stroke="#8c8c8c" stroke-dasharray="1 1"/></svg>
<svg class="ic" style="left:40px;top:369px" width="16" height="16" viewBox="0 0 16 16"><rect x="0" y="0" width="16" height="15.5" rx="1" fill="#70cfdb"/><rect x="4.6" y="4.5" width="11.4" height="11" fill="#b3dcf8"/><rect x="5.3" y="5.3" width="2.7" height="2.5" fill="#fff"/><rect x="9.0" y="5.3" width="2.7" height="2.5" fill="#fff"/><rect x="12.7" y="5.3" width="2.7" height="2.5" fill="#fff"/><rect x="5.3" y="8.8" width="2.7" height="2.5" fill="#fff"/><rect x="9.0" y="8.8" width="2.7" height="2.5" fill="#fff"/><rect x="12.7" y="8.8" width="2.7" height="2.5" fill="#fff"/><rect x="5.3" y="12.3" width="2.7" height="2.5" fill="#fff"/><rect x="9.0" y="12.3" width="2.7" height="2.5" fill="#fff"/><rect x="12.7" y="12.3" width="2.7" height="2.5" fill="#fff"/></svg>
<div class="t " style="left:64px;top:369.8px;">OrgGroupRepo</div>
<div class="r" style="left:436px;top:368px;width:19px;height:19px;background:#ebebeb;border:1px solid #cfcfcf;border-radius:2px"></div>
<div class="t sz" style="left:0px;top:369.8px;left:auto;right:1415px;letter-spacing:-0.45px">64,0 KiB</div>
<svg class="ic" style="left:35px;top:397px" width="5" height="1" viewBox="0 0 5 1"><path d="M0 0.5H5" stroke="#8c8c8c" stroke-dasharray="1 1"/></svg>
<svg class="ic" style="left:40px;top:390px" width="16" height="16" viewBox="0 0 16 16"><rect x="0" y="0" width="16" height="15.5" rx="1" fill="#70cfdb"/><rect x="4.6" y="4.5" width="11.4" height="11" fill="#b3dcf8"/><rect x="5.3" y="5.3" width="2.7" height="2.5" fill="#fff"/><rect x="9.0" y="5.3" width="2.7" height="2.5" fill="#fff"/><rect x="12.7" y="5.3" width="2.7" height="2.5" fill="#fff"/><rect x="5.3" y="8.8" width="2.7" height="2.5" fill="#fff"/><rect x="9.0" y="8.8" width="2.7" height="2.5" fill="#fff"/><rect x="12.7" y="8.8" width="2.7" height="2.5" fill="#fff"/><rect x="5.3" y="12.3" width="2.7" height="2.5" fill="#fff"/><rect x="9.0" y="12.3" width="2.7" height="2.5" fill="#fff"/><rect x="12.7" y="12.3" width="2.7" height="2.5" fill="#fff"/></svg>
<div class="t " style="left:64px;top:390.8px;">OrgInnerPubRepo</div>
<div class="r" style="left:436px;top:389px;width:10px;height:19px;background:#ebebeb;border:1px solid #cfcfcf;border-radius:2px"></div>
<div class="t sz" style="left:0px;top:390.8px;left:auto;right:1415px;letter-spacing:-0.45px">32,0 KiB</div>
<svg class="ic" style="left:35px;top:418px" width="5" height="1" viewBox="0 0 5 1"><path d="M0 0.5H5" stroke="#8c8c8c" stroke-dasharray="1 1"/></svg>
<svg class="ic" style="left:40px;top:411px" width="16" height="16" viewBox="0 0 16 16"><rect x="0" y="0" width="16" height="15.5" rx="1" fill="#70cfdb"/><rect x="4.6" y="4.5" width="11.4" height="11" fill="#b3dcf8"/><rect x="5.3" y="5.3" width="2.7" height="2.5" fill="#fff"/><rect x="9.0" y="5.3" width="2.7" height="2.5" fill="#fff"/><rect x="12.7" y="5.3" width="2.7" height="2.5" fill="#fff"/><rect x="5.3" y="8.8" width="2.7" height="2.5" fill="#fff"/><rect x="9.0" y="8.8" width="2.7" height="2.5" fill="#fff"/><rect x="12.7" y="8.8" width="2.7" height="2.5" fill="#fff"/><rect x="5.3" y="12.3" width="2.7" height="2.5" fill="#fff"/><rect x="9.0" y="12.3" width="2.7" height="2.5" fill="#fff"/><rect x="12.7" y="12.3" width="2.7" height="2.5" fill="#fff"/></svg>
<div class="t " style="left:64px;top:411.8px;">OrgQuota</div>
<div class="r" style="left:436px;top:410px;width:10px;height:19px;background:#ebebeb;border:1px solid #cfcfcf;border-radius:2px"></div>
<div class="t sz" style="left:0px;top:411.8px;left:auto;right:1415px;letter-spacing:-0.45px">32,0 KiB</div>
<svg class="ic" style="left:35px;top:439px" width="5" height="1" viewBox="0 0 5 1"><path d="M0 0.5H5" stroke="#8c8c8c" stroke-dasharray="1 1"/></svg>
<svg class="ic" style="left:40px;top:432px" width="16" height="16" viewBox="0 0 16 16"><rect x="0" y="0" width="16" height="15.5" rx="1" fill="#70cfdb"/><rect x="4.6" y="4.5" width="11.4" height="11" fill="#b3dcf8"/><rect x="5.3" y="5.3" width="2.7" height="2.5" fill="#fff"/><rect x="9.0" y="5.3" width="2.7" height="2.5" fill="#fff"/><rect x="12.7" y="5.3" width="2.7" height="2.5" fill="#fff"/><rect x="5.3" y="8.8" width="2.7" height="2.5" fill="#fff"/><rect x="9.0" y="8.8" width="2.7" height="2.5" fill="#fff"/><rect x="12.7" y="8.8" width="2.7" height="2.5" fill="#fff"/><rect x="5.3" y="12.3" width="2.7" height="2.5" fill="#fff"/><rect x="9.0" y="12.3" width="2.7" height="2.5" fill="#fff"/><rect x="12.7" y="12.3" width="2.7" height="2.5" fill="#fff"/></svg>
<div class="t " style="left:64px;top:432.8px;">OrgRepo</div>
<div class="r" style="left:436px;top:431px;width:24px;height:19px;background:#ebebeb;border:1px solid #cfcfcf;border-radius:2px"></div>
<div class="t sz" style="left:0px;top:432.8px;left:auto;right:1415px;letter-spacing:-0.45px">80,0 KiB</div>
<svg class="ic" style="left:35px;top:460px" width="5" height="1" viewBox="0 0 5 1"><path d="M0 0.5H5" stroke="#8c8c8c" stroke-dasharray="1 1"/></svg>
<svg class="ic" style="left:40px;top:453px" width="16" height="16" viewBox="0 0 16 16"><rect x="0" y="0" width="16" height="15.5" rx="1" fill="#70cfdb"/><rect x="4.6" y="4.5" width="11.4" height="11" fill="#b3dcf8"/><rect x="5.3" y="5.3" width="2.7" height="2.5" fill="#fff"/><rect x="9.0" y="5.3" width="2.7" height="2.5" fill="#fff"/><rect x="12.7" y="5.3" width="2.7" height="2.5" fill="#fff"/><rect x="5.3" y="8.8" width="2.7" height="2.5" fill="#fff"/><rect x="9.0" y="8.8" width="2.7" height="2.5" fill="#fff"/><rect x="12.7" y="8.8" width="2.7" height="2.5" fill="#fff"/><rect x="5.3" y="12.3" width="2.7" height="2.5" fill="#fff"/><rect x="9.0" y="12.3" width="2.7" height="2.5" fill="#fff"/><rect x="12.7" y="12.3" width="2.7" height="2.5" fill="#fff"/></svg>
<div class="t " style="left:64px;top:453.8px;">OrgSharedRepo</div>
<div class="r" style="left:436px;top:452px;width:24px;height:19px;background:#ebebeb;border:1px solid #cfcfcf;border-radius:2px"></div>
<div class="t sz" style="left:0px;top:453.8px;left:auto;right:1415px;letter-spacing:-0.45px">80,0 KiB</div>
<svg class="ic" style="left:35px;top:481px" width="5" height="1" viewBox="0 0 5 1"><path d="M0 0.5H5" stroke="#8c8c8c" stroke-dasharray="1 1"/></svg>
<svg class="ic" style="left:40px;top:474px" width="16" height="16" viewBox="0 0 16 16"><rect x="0" y="0" width="16" height="15.5" rx="1" fill="#70cfdb"/><rect x="4.6" y="4.5" width="11.4" height="11" fill="#b3dcf8"/><rect x="5.3" y="5.3" width="2.7" height="2.5" fill="#fff"/><rect x="9.0" y="5.3" width="2.7" height="2.5" fill="#fff"/><rect x="12.7" y="5.3" width="2.7" height="2.5" fill="#fff"/><rect x="5.3" y="8.8" width="2.7" height="2.5" fill="#fff"/><rect x="9.0" y="8.8" width="2.7" height="2.5" fill="#fff"/><rect x="12.7" y="8.8" width="2.7" height="2.5" fill="#fff"/><rect x="5.3" y="12.3" width="2.7" height="2.5" fill="#fff"/><rect x="9.0" y="12.3" width="2.7" height="2.5" fill="#fff"/><rect x="12.7" y="12.3" width="2.7" height="2.5" fill="#fff"/></svg>
<div class="t " style="left:64px;top:474.8px;">orguploadratelimit</div>
<div class="r" style="left:436px;top:473px;width:10px;height:19px;background:#ebebeb;border:1px solid #cfcfcf;border-radius:2px"></div>
<div class="t sz" style="left:0px;top:474.8px;left:auto;right:1415px;letter-spacing:-0.45px">32,0 KiB</div>
<svg class="ic" style="left:35px;top:502px" width="5" height="1" viewBox="0 0 5 1"><path d="M0 0.5H5" stroke="#8c8c8c" stroke-dasharray="1 1"/></svg>
<svg class="ic" style="left:40px;top:495px" width="16" height="16" viewBox="0 0 16 16"><rect x="0" y="0" width="16" height="15.5" rx="1" fill="#70cfdb"/><rect x="4.6" y="4.5" width="11.4" height="11" fill="#b3dcf8"/><rect x="5.3" y="5.3" width="2.7" height="2.5" fill="#fff"/><rect x="9.0" y="5.3" width="2.7" height="2.5" fill="#fff"/><rect x="12.7" y="5.3" width="2.7" height="2.5" fill="#fff"/><rect x="5.3" y="8.8" width="2.7" height="2.5" fill="#fff"/><rect x="9.0" y="8.8" width="2.7" height="2.5" fill="#fff"/><rect x="12.7" y="8.8" width="2.7" height="2.5" fill="#fff"/><rect x="5.3" y="12.3" width="2.7" height="2.5" fill="#fff"/><rect x="9.0" y="12.3" width="2.7" height="2.5" fill="#fff"/><rect x="12.7" y="12.3" width="2.7" height="2.5" fill="#fff"/></svg>
<div class="t " style="left:64px;top:495.8px;">orguserdefaultquota</div>
<div class="r" style="left:436px;top:494px;width:10px;height:19px;background:#ebebeb;border:1px solid #cfcfcf;border-radius:2px"></div>
<div class="t sz" style="left:0px;top:495.8px;left:auto;right:1415px;letter-spacing:-0.45px">32,0 KiB</div>
<svg class="ic" style="left:35px;top:523px" width="5" height="1" viewBox="0 0 5 1"><path d="M0 0.5H5" stroke="#8c8c8c" stroke-dasharray="1 1"/></svg>
<svg class="ic" style="left:40px;top:516px" width="16" height="16" viewBox="0 0 16 16"><rect x="0" y="0" width="16" height="15.5" rx="1" fill="#70cfdb"/><rect x="4.6" y="4.5" width="11.4" height="11" fill="#b3dcf8"/><rect x="5.3" y="5.3" width="2.7" height="2.5" fill="#fff"/><rect x="9.0" y="5.3" width="2.7" height="2.5" fill="#fff"/><rect x="12.7" y="5.3" width="2.7" height="2.5" fill="#fff"/><rect x="5.3" y="8.8" width="2.7" height="2.5" fill="#fff"/><rect x="9.0" y="8.8" width="2.7" height="2.5" fill="#fff"/><rect x="12.7" y="8.8" width="2.7" height="2.5" fill="#fff"/><rect x="5.3" y="12.3" width="2.7" height="2.5" fill="#fff"/><rect x="9.0" y="12.3" width="2.7" height="2.5" fill="#fff"/><rect x="12.7" y="12.3" width="2.7" height="2.5" fill="#fff"/></svg>
<div class="t " style="left:64px;top:516.8px;">OrgUserQuota</div>
<div class="r" style="left:436px;top:515px;width:10px;height:19px;background:#ebebeb;border:1px solid #cfcfcf;border-radius:2px"></div>
<div class="t sz" style="left:0px;top:516.8px;left:auto;right:1415px;letter-spacing:-0.45px">32,0 KiB</div>
<svg class="ic" style="left:35px;top:544px" width="5" height="1" viewBox="0 0 5 1"><path d="M0 0.5H5" stroke="#8c8c8c" stroke-dasharray="1 1"/></svg>
<svg class="ic" style="left:40px;top:537px" width="16" height="16" viewBox="0 0 16 16"><rect x="0" y="0" width="16" height="15.5" rx="1" fill="#70cfdb"/><rect x="4.6" y="4.5" width="11.4" height="11" fill="#b3dcf8"/><rect x="5.3" y="5.3" width="2.7" height="2.5" fill="#fff"/><rect x="9.0" y="5.3" width="2.7" height="2.5" fill="#fff"/><rect x="12.7" y="5.3" width="2.7" height="2.5" fill="#fff"/><rect x="5.3" y="8.8" width="2.7" height="2.5" fill="#fff"/><rect x="9.0" y="8.8" width="2.7" height="2.5" fill="#fff"/><rect x="12.7" y="8.8" width="2.7" height="2.5" fill="#fff"/><rect x="5.3" y="12.3" width="2.7" height="2.5" fill="#fff"/><rect x="9.0" y="12.3" width="2.7" height="2.5" fill="#fff"/><rect x="12.7" y="12.3" width="2.7" height="2.5" fill="#fff"/></svg>
<div class="t " style="left:64px;top:537.8px;">Repo</div>
<div class="r" style="left:436px;top:536px;width:10px;height:19px;background:#ebebeb;border:1px solid #cfcfcf;border-radius:2px"></div>
<div class="t sz" style="left:0px;top:537.8px;left:auto;right:1415px;letter-spacing:-0.45px">32,0 KiB</div>
<svg class="ic" style="left:35px;top:565px" width="5" height="1" viewBox="0 0 5 1"><path d="M0 0.5H5" stroke="#8c8c8c" stroke-dasharray="1 1"/></svg>
<svg class="ic" style="left:40px;top:558px" width="16" height="16" viewBox="0 0 16 16"><rect x="0" y="0" width="16" height="15.5" rx="1" fill="#14b0c4"/><rect x="4.6" y="4.5" width="11.4" height="11" fill="#b3dcf8"/><rect x="5.3" y="5.3" width="2.7" height="2.5" fill="#fff"/><rect x="9.0" y="5.3" width="2.7" height="2.5" fill="#fff"/><rect x="12.7" y="5.3" width="2.7" height="2.5" fill="#fff"/><rect x="5.3" y="8.8" width="2.7" height="2.5" fill="#fff"/><rect x="9.0" y="8.8" width="2.7" height="2.5" fill="#fff"/><rect x="12.7" y="8.8" width="2.7" height="2.5" fill="#fff"/><rect x="5.3" y="12.3" width="2.7" height="2.5" fill="#fff"/><rect x="9.0" y="12.3" width="2.7" height="2.5" fill="#fff"/><rect x="12.7" y="12.3" width="2.7" height="2.5" fill="#fff"/></svg>
<div class="t " style="left:64px;top:558.8px;">RepoFileCount</div>
<div class="r" style="left:436px;top:557px;width:10px;height:19px;background:#ebebeb;border:1px solid #cfcfcf;border-radius:2px"></div>
<div class="t sz" style="left:0px;top:558.8px;left:auto;right:1415px;letter-spacing:-0.45px">32,0 KiB</div>
<div class="r" style="left:2px;top:576px;width:509px;height:21px;background:#d9d9d9;border:1px solid #9a9a9a"></div>
<svg class="ic" style="left:35px;top:586px" width="5" height="1" viewBox="0 0 5 1"><path d="M0 0.5H5" stroke="#8c8c8c" stroke-dasharray="1 1"/></svg>
<svg class="ic" style="left:40px;top:579px" width="16" height="16" viewBox="0 0 16 16"><rect x="0" y="0" width="16" height="15.5" rx="1" fill="#14b0c4"/><rect x="4.6" y="4.5" width="11.4" height="11" fill="#b3dcf8"/><rect x="5.3" y="5.3" width="2.7" height="2.5" fill="#fff"/><rect x="9.0" y="5.3" width="2.7" height="2.5" fill="#fff"/><rect x="12.7" y="5.3" width="2.7" height="2.5" fill="#fff"/><rect x="5.3" y="8.8" width="2.7" height="2.5" fill="#fff"/><rect x="9.0" y="8.8" width="2.7" height="2.5" fill="#fff"/><rect x="12.7" y="8.8" width="2.7" height="2.5" fill="#fff"/><rect x="5.3" y="12.3" width="2.7" height="2.5" fill="#fff"/><rect x="9.0" y="12.3" width="2.7" height="2.5" fill="#fff"/><rect x="12.7" y="12.3" width="2.7" height="2.5" fill="#fff"/></svg>
<div class="t b" style="left:64px;top:579.8px;">repogroup</div>
<div class="r" style="left:436px;top:578px;width:19px;height:19px;background:#c4c4c4;border:1px solid #a8a8a8;border-radius:2px"></div>
<div class="t sz" style="left:0px;top:579.8px;left:auto;right:1415px;letter-spacing:-0.45px">64,0 KiB</div>
<svg class="ic" style="left:35px;top:607px" width="5" height="1" viewBox="0 0 5 1"><path d="M0 0.5H5" stroke="#8c8c8c" stroke-dasharray="1 1"/></svg>
<svg class="ic" style="left:40px;top:600px" width="16" height="16" viewBox="0 0 16 16"><rect x="0" y="0" width="16" height="15.5" rx="1" fill="#70cfdb"/><rect x="4.6" y="4.5" width="11.4" height="11" fill="#b3dcf8"/><rect x="5.3" y="5.3" width="2.7" height="2.5" fill="#fff"/><rect x="9.0" y="5.3" width="2.7" height="2.5" fill="#fff"/><rect x="12.7" y="5.3" width="2.7" height="2.5" fill="#fff"/><rect x="5.3" y="8.8" width="2.7" height="2.5" fill="#fff"/><rect x="9.0" y="8.8" width="2.7" height="2.5" fill="#fff"/><rect x="12.7" y="8.8" width="2.7" height="2.5" fill="#fff"/><rect x="5.3" y="12.3" width="2.7" height="2.5" fill="#fff"/><rect x="9.0" y="12.3" width="2.7" height="2.5" fill="#fff"/><rect x="12.7" y="12.3" width="2.7" height="2.5" fill="#fff"/></svg>
<div class="t " style="left:64px;top:600.8px;">repohead</div>
<div class="r" style="left:436px;top:599px;width:10px;height:19px;background:#ebebeb;border:1px solid #cfcfcf;border-radius:2px"></div>
<div class="t sz" style="left:0px;top:600.8px;left:auto;right:1415px;letter-spacing:-0.45px">32,0 KiB</div>
<svg class="ic" style="left:35px;top:628px" width="5" height="1" viewBox="0 0 5 1"><path d="M0 0.5H5" stroke="#8c8c8c" stroke-dasharray="1 1"/></svg>
<svg class="ic" style="left:40px;top:621px" width="16" height="16" viewBox="0 0 16 16"><rect x="0" y="0" width="16" height="15.5" rx="1" fill="#70cfdb"/><rect x="4.6" y="4.5" width="11.4" height="11" fill="#b3dcf8"/><rect x="5.3" y="5.3" width="2.7" height="2.5" fill="#fff"/><rect x="9.0" y="5.3" width="2.7" height="2.5" fill="#fff"/><rect x="12.7" y="5.3" width="2.7" height="2.5" fill="#fff"/><rect x="5.3" y="8.8" width="2.7" height="2.5" fill="#fff"/><rect x="9.0" y="8.8" width="2.7" height="2.5" fill="#fff"/><rect x="12.7" y="8.8" width="2.7" height="2.5" fill="#fff"/><rect x="5.3" y="12.3" width="2.7" height="2.5" fill="#fff"/><rect x="9.0" y="12.3" width="2.7" height="2.5" fill="#fff"/><rect x="12.7" y="12.3" width="2.7" height="2.5" fill="#fff"/></svg>
<div class="t " style="left:64px;top:621.8px;">repohistorylimit</div>
<div class="r" style="left:436px;top:620px;width:10px;height:19px;background:#ebebeb;border:1px solid #cfcfcf;border-radius:2px"></div>
<div class="t sz" style="left:0px;top:621.8px;left:auto;right:1415px;letter-spacing:-0.45px">32,0 KiB</div>
<svg class="ic" style="left:35px;top:649px" width="5" height="1" viewBox="0 0 5 1"><path d="M0 0.5H5" stroke="#8c8c8c" stroke-dasharray="1 1"/></svg>
<svg class="ic" style="left:40px;top:642px" width="16" height="16" viewBox="0 0 16 16"><rect x="0" y="0" width="16" height="15.5" rx="1" fill="#70cfdb"/><rect x="4.6" y="4.5" width="11.4" height="11" fill="#b3dcf8"/><rect x="5.3" y="5.3" width="2.7" height="2.5" fill="#fff"/><rect x="9.0" y="5.3" width="2.7" height="2.5" fill="#fff"/><rect x="12.7" y="5.3" width="2.7" height="2.5" fill="#fff"/><rect x="5.3" y="8.8" width="2.7" height="2.5" fill="#fff"/><rect x="9.0" y="8.8" width="2.7" height="2.5" fill="#fff"/><rect x="12.7" y="8.8" width="2.7" height="2.5" fill="#fff"/><rect x="5.3" y="12.3" width="2.7" height="2.5" fill="#fff"/><rect x="9.0" y="12.3" width="2.7" height="2.5" fill="#fff"/><rect x="12.7" y="12.3" width="2.7" height="2.5" fill="#fff"/></svg>
<div class="t " style="left:64px;top:642.8px;">repoinfo</div>
<div class="r" style="left:436px;top:641px;width:14px;height:19px;background:#ebebeb;border:1px solid #cfcfcf;border-radius:2px"></div>
<div class="t sz" style="left:0px;top:642.8px;left:auto;right:1415px;letter-spacing:-0.45px">48,0 KiB</div>
<svg class="ic" style="left:35px;top:670px" width="5" height="1" viewBox="0 0 5 1"><path d="M0 0.5H5" stroke="#8c8c8c" stroke-dasharray="1 1"/></svg>
<svg class="ic" style="left:40px;top:663px" width="16" height="16" viewBox="0 0 16 16"><rect x="0" y="0" width="16" height="15.5" rx="1" fill="#70cfdb"/><rect x="4.6" y="4.5" width="11.4" height="11" fill="#b3dcf8"/><rect x="5.3" y="5.3" width="2.7" height="2.5" fill="#fff"/><rect x="9.0" y="5.3" width="2.7" height="2.5" fill="#fff"/><rect x="12.7" y="5.3" width="2.7" height="2.5" fill="#fff"/><rect x="5.3" y="8.8" width="2.7" height="2.5" fill="#fff"/><rect x="9.0" y="8.8" width="2.7" height="2.5" fill="#fff"/><rect x="12.7" y="8.8" width="2.7" height="2.5" fill="#fff"/><rect x="5.3" y="12.3" width="2.7" height="2.5" fill="#fff"/><rect x="9.0" y="12.3" width="2.7" height="2.5" fill="#fff"/><rect x="12.7" y="12.3" width="2.7" height="2.5" fill="#fff"/></svg>
<div class="t " style="left:64px;top:663.8px;">repoowner</div>
<div class="r" style="left:436px;top:662px;width:14px;height:19px;background:#ebebeb;border:1px solid #cfcfcf;border-radius:2px"></div>
<div class="t sz" style="left:0px;top:663.8px;left:auto;right:1415px;letter-spacing:-0.45px">48,0 KiB</div>
<svg class="ic" style="left:35px;top:691px" width="5" height="1" viewBox="0 0 5 1"><path d="M0 0.5H5" stroke="#8c8c8c" stroke-dasharray="1 1"/></svg>
<svg class="ic" style="left:40px;top:684px" width="16" height="16" viewBox="0 0 16 16"><rect x="0" y="0" width="16" height="15.5" rx="1" fill="#70cfdb"/><rect x="4.6" y="4.5" width="11.4" height="11" fill="#b3dcf8"/><rect x="5.3" y="5.3" width="2.7" height="2.5" fill="#fff"/><rect x="9.0" y="5.3" width="2.7" height="2.5" fill="#fff"/><rect x="12.7" y="5.3" width="2.7" height="2.5" fill="#fff"/><rect x="5.3" y="8.8" width="2.7" height="2.5" fill="#fff"/><rect x="9.0" y="8.8" width="2.7" height="2.5" fill="#fff"/><rect x="12.7" y="8.8" width="2.7" height="2.5" fill="#fff"/><rect x="5.3" y="12.3" width="2.7" height="2.5" fill="#fff"/><rect x="9.0" y="12.3" width="2.7" height="2.5" fill="#fff"/><rect x="12.7" y="12.3" width="2.7" height="2.5" fill="#fff"/></svg>
<div class="t " style="left:64px;top:684.8px;">reposize</div>
<div class="r" style="left:436px;top:683px;width:10px;height:19px;background:#ebebeb;border:1px solid #cfcfcf;border-radius:2px"></div>
<div class="t sz" style="left:0px;top:684.8px;left:auto;right:1415px;letter-spacing:-0.45px">32,0 KiB</div>
<svg class="ic" style="left:35px;top:712px" width="5" height="1" viewBox="0 0 5 1"><path d="M0 0.5H5" stroke="#8c8c8c" stroke-dasharray="1 1"/></svg>
<svg class="ic" style="left:40px;top:705px" width="16" height="16" viewBox="0 0 16 16"><rect x="0" y="0" width="16" height="15.5" rx="1" fill="#70cfdb"/><rect x="4.6" y="4.5" width="11.4" height="11" fill="#b3dcf8"/><rect x="5.3" y="5.3" width="2.7" height="2.5" fill="#fff"/><rect x="9.0" y="5.3" width="2.7" height="2.5" fill="#fff"/><rect x="12.7" y="5.3" width="2.7" height="2.5" fill="#fff"/><rect x="5.3" y="8.8" width="2.7" height="2.5" fill="#fff"/><rect x="9.0" y="8.8" width="2.7" height="2.5" fill="#fff"/><rect x="12.7" y="8.8" width="2.7" height="2.5" fill="#fff"/><rect x="5.3" y="12.3" width="2.7" height="2.5" fill="#fff"/><rect x="9.0" y="12.3" width="2.7" height="2.5" fill="#fff"/><rect x="12.7" y="12.3" width="2.7" height="2.5" fill="#fff"/></svg>
<div class="t " style="left:64px;top:705.8px;">reposyncerror</div>
<div class="r" style="left:436px;top:704px;width:10px;height:19px;background:#ebebeb;border:1px solid #cfcfcf;border-radius:2px"></div>
<div class="t sz" style="left:0px;top:705.8px;left:auto;right:1415px;letter-spacing:-0.45px">32,0 KiB</div>
<svg class="ic" style="left:35px;top:733px" width="5" height="1" viewBox="0 0 5 1"><path d="M0 0.5H5" stroke="#8c8c8c" stroke-dasharray="1 1"/></svg>
<svg class="ic" style="left:40px;top:726px" width="16" height="16" viewBox="0 0 16 16"><rect x="0" y="0" width="16" height="15.5" rx="1" fill="#70cfdb"/><rect x="4.6" y="4.5" width="11.4" height="11" fill="#b3dcf8"/><rect x="5.3" y="5.3" width="2.7" height="2.5" fill="#fff"/><rect x="9.0" y="5.3" width="2.7" height="2.5" fill="#fff"/><rect x="12.7" y="5.3" width="2.7" height="2.5" fill="#fff"/><rect x="5.3" y="8.8" width="2.7" height="2.5" fill="#fff"/><rect x="9.0" y="8.8" width="2.7" height="2.5" fill="#fff"/><rect x="12.7" y="8.8" width="2.7" height="2.5" fill="#fff"/><rect x="5.3" y="12.3" width="2.7" height="2.5" fill="#fff"/><rect x="9.0" y="12.3" width="2.7" height="2.5" fill="#fff"/><rect x="12.7" y="12.3" width="2.7" height="2.5" fill="#fff"/></svg>
<div class="t " style="left:64px;top:726.8px;">repotokenpeerinfo</div>
<div class="r" style="left:436px;top:725px;width:29px;height:19px;background:#ebebeb;border:1px solid #cfcfcf;border-radius:2px"></div>
<div class="t sz" style="left:0px;top:726.8px;left:auto;right:1415px;letter-spacing:-0.45px">96,0 KiB</div>
<svg class="ic" style="left:35px;top:754px" width="5" height="1" viewBox="0 0 5 1"><path d="M0 0.5H5" stroke="#8c8c8c" stroke-dasharray="1 1"/></svg>
<svg class="ic" style="left:40px;top:747px" width="16" height="16" viewBox="0 0 16 16"><rect x="0" y="0" width="16" height="15.5" rx="1" fill="#70cfdb"/><rect x="4.6" y="4.5" width="11.4" height="11" fill="#b3dcf8"/><rect x="5.3" y="5.3" width="2.7" height="2.5" fill="#fff"/><rect x="9.0" y="5.3" width="2.7" height="2.5" fill="#fff"/><rect x="12.7" y="5.3" width="2.7" height="2.5" fill="#fff"/><rect x="5.3" y="8.8" width="2.7" height="2.5" fill="#fff"/><rect x="9.0" y="8.8" width="2.7" height="2.5" fill="#fff"/><rect x="12.7" y="8.8" width="2.7" height="2.5" fill="#fff"/><rect x="5.3" y="12.3" width="2.7" height="2.5" fill="#fff"/><rect x="9.0" y="12.3" width="2.7" height="2.5" fill="#fff"/><rect x="12.7" y="12.3" width="2.7" height="2.5" fill="#fff"/></svg>
<div class="t " style="left:64px;top:747.8px;">repotrash</div>
<div class="r" style="left:436px;top:746px;width:19px;height:19px;background:#ebebeb;border:1px solid #cfcfcf;border-radius:2px"></div>
<div class="t sz" style="left:0px;top:747.8px;left:auto;right:1415px;letter-spacing:-0.45px">64,0 KiB</div>
<svg class="ic" style="left:35px;top:775px" width="5" height="1" viewBox="0 0 5 1"><path d="M0 0.5H5" stroke="#8c8c8c" stroke-dasharray="1 1"/></svg>
<svg class="ic" style="left:40px;top:768px" width="16" height="16" viewBox="0 0 16 16"><rect x="0" y="0" width="16" height="15.5" rx="1" fill="#70cfdb"/><rect x="4.6" y="4.5" width="11.4" height="11" fill="#b3dcf8"/><rect x="5.3" y="5.3" width="2.7" height="2.5" fill="#fff"/><rect x="9.0" y="5.3" width="2.7" height="2.5" fill="#fff"/><rect x="12.7" y="5.3" width="2.7" height="2.5" fill="#fff"/><rect x="5.3" y="8.8" width="2.7" height="2.5" fill="#fff"/><rect x="9.0" y="8.8" width="2.7" height="2.5" fill="#fff"/><rect x="12.7" y="8.8" width="2.7" height="2.5" fill="#fff"/><rect x="5.3" y="12.3" width="2.7" height="2.5" fill="#fff"/><rect x="9.0" y="12.3" width="2.7" height="2.5" fill="#fff"/><rect x="12.7" y="12.3" width="2.7" height="2.5" fill="#fff"/></svg>
<div class="t " style="left:64px;top:768.8px;">repousertoken</div>
<div class="r" style="left:436px;top:767px;width:72px;height:19px;background:#ebebeb;border:1px solid #cfcfcf;border-radius:2px"></div>
<div class="t sz" style="left:0px;top:768.8px;left:auto;right:1415px;letter-spacing:-0.45px">240,0 KiB</div>
<svg class="ic" style="left:35px;top:796px" width="5" height="1" viewBox="0 0 5 1"><path d="M0 0.5H5" stroke="#8c8c8c" stroke-dasharray="1 1"/></svg>
<svg class="ic" style="left:40px;top:789px" width="16" height="16" viewBox="0 0 16 16"><rect x="0" y="0" width="16" height="15.5" rx="1" fill="#70cfdb"/><rect x="4.6" y="4.5" width="11.4" height="11" fill="#b3dcf8"/><rect x="5.3" y="5.3" width="2.7" height="2.5" fill="#fff"/><rect x="9.0" y="5.3" width="2.7" height="2.5" fill="#fff"/><rect x="12.7" y="5.3" width="2.7" height="2.5" fill="#fff"/><rect x="5.3" y="8.8" width="2.7" height="2.5" fill="#fff"/><rect x="9.0" y="8.8" width="2.7" height="2.5" fill="#fff"/><rect x="12.7" y="8.8" width="2.7" height="2.5" fill="#fff"/><rect x="5.3" y="12.3" width="2.7" height="2.5" fill="#fff"/><rect x="9.0" y="12.3" width="2.7" height="2.5" fill="#fff"/><rect x="12.7" y="12.3" width="2.7" height="2.5" fill="#fff"/></svg>
<div class="t " style="left:64px;top:789.8px;">repovalidsince</div>
<div class="r" style="left:436px;top:788px;width:10px;height:19px;background:#ebebeb;border:1px solid #cfcfcf;border-radius:2px"></div>
<div class="t sz" style="left:0px;top:789.8px;left:auto;right:1415px;letter-spacing:-0.45px">32,0 KiB</div>
<svg class="ic" style="left:35px;top:817px" width="5" height="1" viewBox="0 0 5 1"><path d="M0 0.5H5" stroke="#8c8c8c" stroke-dasharray="1 1"/></svg>
<svg class="ic" style="left:40px;top:810px" width="16" height="16" viewBox="0 0 16 16"><rect x="0" y="0" width="16" height="15.5" rx="1" fill="#70cfdb"/><rect x="4.6" y="4.5" width="11.4" height="11" fill="#b3dcf8"/><rect x="5.3" y="5.3" width="2.7" height="2.5" fill="#fff"/><rect x="9.0" y="5.3" width="2.7" height="2.5" fill="#fff"/><rect x="12.7" y="5.3" width="2.7" height="2.5" fill="#fff"/><rect x="5.3" y="8.8" width="2.7" height="2.5" fill="#fff"/><rect x="9.0" y="8.8" width="2.7" height="2.5" fill="#fff"/><rect x="12.7" y="8.8" width="2.7" height="2.5" fill="#fff"/><rect x="5.3" y="12.3" width="2.7" height="2.5" fill="#fff"/><rect x="9.0" y="12.3" width="2.7" height="2.5" fill="#fff"/><rect x="12.7" y="12.3" width="2.7" height="2.5" fill="#fff"/></svg>
<div class="t " style="left:64px;top:810.8px;">roledownloadratelimit</div>
<div class="r" style="left:436px;top:809px;width:10px;height:19px;background:#ebebeb;border:1px solid #cfcfcf;border-radius:2px"></div>
<div class="t sz" style="left:0px;top:810.8px;left:auto;right:1415px;letter-spacing:-0.45px">32,0 KiB</div>
<svg class="ic" style="left:35px;top:838px" width="5" height="1" viewBox="0 0 5 1"><path d="M0 0.5H5" stroke="#8c8c8c" stroke-dasharray="1 1"/></svg>
<svg class="ic" style="left:40px;top:831px" width="16" height="16" viewBox="0 0 16 16"><rect x="0" y="0" width="16" height="15.5" rx="1" fill="#70cfdb"/><rect x="4.6" y="4.5" width="11.4" height="11" fill="#b3dcf8"/><rect x="5.3" y="5.3" width="2.7" height="2.5" fill="#fff"/><rect x="9.0" y="5.3" width="2.7" height="2.5" fill="#fff"/><rect x="12.7" y="5.3" width="2.7" height="2.5" fill="#fff"/><rect x="5.3" y="8.8" width="2.7" height="2.5" fill="#fff"/><rect x="9.0" y="8.8" width="2.7" height="2.5" fill="#fff"/><rect x="12.7" y="8.8" width="2.7" height="2.5" fill="#fff"/><rect x="5.3" y="12.3" width="2.7" height="2.5" fill="#fff"/><rect x="9.0" y="12.3" width="2.7" height="2.5" fill="#fff"/><rect x="12.7" y="12.3" width="2.7" height="2.5" fill="#fff"/></svg>
<div class="t " style="left:64px;top:831.8px;">roleuploadratelimit</div>
<div class="r" style="left:436px;top:830px;width:10px;height:19px;background:#ebebeb;border:1px solid #cfcfcf;border-radius:2px"></div>
<div class="t sz" style="left:0px;top:831.8px;left:auto;right:1415px;letter-spacing:-0.45px">32,0 KiB</div>
<svg class="ic" style="left:35px;top:859px" width="5" height="1" viewBox="0 0 5 1"><path d="M0 0.5H5" stroke="#8c8c8c" stroke-dasharray="1 1"/></svg>
<svg class="ic" style="left:40px;top:852px" width="16" height="16" viewBox="0 0 16 16"><rect x="0" y="0" width="16" height="15.5" rx="1" fill="#70cfdb"/><rect x="4.6" y="4.5" width="11.4" height="11" fill="#b3dcf8"/><rect x="5.3" y="5.3" width="2.7" height="2.5" fill="#fff"/><rect x="9.0" y="5.3" width="2.7" height="2.5" fill="#fff"/><rect x="12.7" y="5.3" width="2.7" height="2.5" fill="#fff"/><rect x="5.3" y="8.8" width="2.7" height="2.5" fill="#fff"/><rect x="9.0" y="8.8" width="2.7" height="2.5" fill="#fff"/><rect x="12.7" y="8.8" width="2.7" height="2.5" fill="#fff"/><rect x="5.3" y="12.3" width="2.7" height="2.5" fill="#fff"/><rect x="9.0" y="12.3" width="2.7" height="2.5" fill="#fff"/><rect x="12.7" y="12.3" width="2.7" height="2.5" fill="#fff"/></svg>
<div class="t " style="left:64px;top:852.8px;">seafileconf</div>
<div class="r" style="left:436px;top:851px;width:5px;height:19px;background:#ebebeb;border:1px solid #cfcfcf;border-radius:2px"></div>
<div class="t sz" style="left:0px;top:852.8px;left:auto;right:1415px;letter-spacing:-0.45px">16,0 KiB</div>
<div class="r" style="left:534px;top:91px;width:1383px;height:776px;background:#f9f9f9;border:1px solid #dedede;border-bottom:1px solid #e6e6e6"></div>
<div class="r" style="left:537px;top:72px;width:56px;height:19px;background:#f0f0f0;border:1px solid #e3e3e3;border-bottom:none"></div>
<div class="r" style="left:593px;top:72px;width:158px;height:19px;background:#f0f0f0;border:1px solid #e3e3e3;border-bottom:none"></div>
<div class="r" style="left:897px;top:72px;width:75px;height:19px;background:#f0f0f0;border:1px solid #e3e3e3;border-bottom:none"></div>
<div class="r" style="left:972px;top:72px;width:77px;height:19px;background:#f0f0f0;border:1px solid #e3e3e3;border-bottom:none"></div>
<div class="r" style="left:751px;top:70px;width:146px;height:22px;background:#f9f9f9;border:1px solid #dedede;border-bottom:none"></div>
<svg class="ic" style="left:545px;top:73px" width="10" height="16" viewBox="0 0 10 16"><rect x="0" y="0" width="10" height="16" rx="1" fill="#2196f3"/><rect x="1.2" y="1.3" width="7.6" height="1.6" fill="#37474f"/><rect x="7.6" y="1.5" width="1" height="1" fill="#8bc34a"/><rect x="1.2" y="3.7" width="7.6" height="1.6" fill="#37474f"/><rect x="7.6" y="3.9" width="1" height="1" fill="#8bc34a"/><rect x="1.2" y="6.1" width="7.6" height="1.6" fill="#37474f"/><rect x="7.6" y="6.3" width="1" height="1" fill="#8bc34a"/><rect x="1.2" y="8.5" width="7.6" height="1.6" fill="#37474f"/><rect x="7.6" y="8.7" width="1" height="1" fill="#8bc34a"/><rect x="4.3" y="12.6" width="1.4" height="1.2" fill="#fff"/></svg>
<div class="t " style="left:564px;top:75px;">NAS</div>
<svg class="ic" style="left:600px;top:73px" width="14" height="16" viewBox="0 0 14 16"><rect x="0" y="0.5" width="14" height="4.5" rx="0.8" fill="#d1c4e9"/><rect x="0" y="6" width="14" height="4.5" rx="0.8" fill="#d1c4e9"/><rect x="0" y="11.5" width="14" height="4.5" rx="0.8" fill="#d1c4e9"/></svg>
<div class="t " style="left:621px;top:75px;letter-spacing:-0.25px">База данных: seafile-db</div>
<svg class="ic" style="left:758px;top:71px" width="16" height="16" viewBox="0 0 16 16"><rect x="0" y="0" width="16" height="15.5" rx="1" fill="#1fb3c4"/><rect x="4.6" y="4.5" width="11.4" height="11" fill="#b3dcf8"/><rect x="5.3" y="5.3" width="2.7" height="2.5" fill="#fff"/><rect x="9.0" y="5.3" width="2.7" height="2.5" fill="#fff"/><rect x="12.7" y="5.3" width="2.7" height="2.5" fill="#fff"/><rect x="5.3" y="8.8" width="2.7" height="2.5" fill="#fff"/><rect x="9.0" y="8.8" width="2.7" height="2.5" fill="#fff"/><rect x="12.7" y="8.8" width="2.7" height="2.5" fill="#fff"/><rect x="5.3" y="12.3" width="2.7" height="2.5" fill="#fff"/><rect x="9.0" y="12.3" width="2.7" height="2.5" fill="#fff"/><rect x="12.7" y="12.3" width="2.7" height="2.5" fill="#fff"/></svg>
<div class="t " style="left:780px;top:73px;">Таблица: repogroup</div>
<svg class="ic" style="left:901px;top:73px" width="16" height="16" viewBox="0 0 16 16"><rect x="0" y="0" width="16" height="16" rx="3" fill="#90caf9"/><rect x="2.3" y="2.3" width="3" height="3" fill="#fff"/><rect x="6.4" y="2.3" width="3" height="3" fill="#fff"/><rect x="10.5" y="2.3" width="3" height="3" fill="#fff"/><rect x="2.3" y="6.4" width="3" height="3" fill="#fff"/><rect x="6.4" y="6.4" width="3" height="3" fill="#fff"/><rect x="10.5" y="6.4" width="3" height="3" fill="#fff"/><rect x="2.3" y="10.5" width="3" height="3" fill="#fff"/><rect x="6.4" y="10.5" width="3" height="3" fill="#fff"/><rect x="10.5" y="10.5" width="3" height="3" fill="#fff"/></svg>
<div class="t " style="left:923px;top:75px;">Данные</div>
<svg class="ic" style="left:978px;top:73px" width="15" height="16" viewBox="0 0 15 16"><path d="M0.5 0.5L14.5 8L0.5 15.5Z" fill="#c0c0c0"/></svg>
<div class="t " style="left:1000px;top:75px;">Запрос*</div>
<svg class="ic" style="left:1057px;top:73px" width="17" height="17" viewBox="0 0 17 17"><rect x="0.5" y="0.5" width="12" height="14" fill="#e3f2fd" stroke="#64b5f6"/><path d="M2.5 3.5h8M2.5 6h8M2.5 8.5h5" stroke="#90a4ae" stroke-width="1"/><circle cx="13" cy="13.5" r="3.3" fill="#4caf50"/><path d="M13 11.5v4M11 13.5h4" stroke="#fff" stroke-width="1.2"/></svg>
<div class="r" style="left:541px;top:120px;width:1370px;height:126px;background:#f9f9f9;border:1px solid #e3e3e3"></div>
<div class="r" style="left:634px;top:100.5px;width:70px;height:20px;background:#f0f0f0;border:1px solid #e6e6e6;border-bottom:none"></div>
<div class="r" style="left:704px;top:100.5px;width:99px;height:20px;background:#f0f0f0;border:1px solid #e6e6e6;border-bottom:none"></div>
<div class="r" style="left:803px;top:100.5px;width:142px;height:20px;background:#f0f0f0;border:1px solid #e6e6e6;border-bottom:none"></div>
<div class="r" style="left:945px;top:100.5px;width:187px;height:20px;background:#f0f0f0;border:1px solid #e6e6e6;border-bottom:none"></div>
<div class="r" style="left:1132px;top:100.5px;width:89px;height:20px;background:#f0f0f0;border:1px solid #e6e6e6;border-bottom:none"></div>
<div class="r" style="left:1221px;top:100.5px;width:97px;height:20px;background:#f0f0f0;border:1px solid #e6e6e6;border-bottom:none"></div>
<div class="r" style="left:1318px;top:100.5px;width:89px;height:20px;background:#f0f0f0;border:1px solid #e6e6e6;border-bottom:none"></div>
<div class="r" style="left:541px;top:98.5px;width:93px;height:23px;background:#f9f9f9;border:1px solid #e3e3e3;border-bottom:none"></div>
<svg class="ic" style="left:549px;top:100px" width="16" height="16" viewBox="0 0 16 16"><rect x="0" y="0" width="16" height="15.5" rx="1" fill="#1fb3c4"/><rect x="4.6" y="4.5" width="11.4" height="11" fill="#b3dcf8"/><rect x="5.3" y="5.3" width="2.7" height="2.5" fill="#fff"/><rect x="9.0" y="5.3" width="2.7" height="2.5" fill="#fff"/><rect x="12.7" y="5.3" width="2.7" height="2.5" fill="#fff"/><rect x="5.3" y="8.8" width="2.7" height="2.5" fill="#fff"/><rect x="9.0" y="8.8" width="2.7" height="2.5" fill="#fff"/><rect x="12.7" y="8.8" width="2.7" height="2.5" fill="#fff"/><rect x="5.3" y="12.3" width="2.7" height="2.5" fill="#fff"/><rect x="9.0" y="12.3" width="2.7" height="2.5" fill="#fff"/><rect x="12.7" y="12.3" width="2.7" height="2.5" fill="#fff"/></svg>
<div class="t " style="left:571.5px;top:102px;">Основной</div>
<svg class="ic" style="left:639px;top:101px" width="17" height="17" viewBox="0 0 17 17"><defs><mask id="wm"><rect width="17" height="17" fill="#fff"/><path d="M11.5 5.5L17 0" stroke="#000" stroke-width="3.4"/></mask></defs><g mask="url(#wm)"><circle cx="11.5" cy="5.5" r="4.8" fill="#607d8b"/><path d="M2.3 14.7L10 7" stroke="#607d8b" stroke-width="3.2" stroke-linecap="round"/></g><circle cx="2.6" cy="14.4" r="0.9" fill="#f0f0f0"/></svg>
<div class="t " style="left:661.5px;top:104.2px;">Опции</div>
<svg class="ic" style="left:713px;top:102px" width="9" height="17" viewBox="0 0 9 17"><path d="M3.5 0H9L5.8 6.5H8.5L1 17L3.3 8.5H0.5Z" fill="#e040fb"/></svg>
<div class="t " style="left:732px;top:104.2px;">Индексы (4)</div>
<svg class="ic" style="left:810px;top:103px" width="16" height="16" viewBox="0 0 16 16"><path d="M0.5 1.5h3M0.5 4.5h3M0.5 7.5h3M0.5 10.5h3M0.5 13.5h3M12.5 1.5h3M12.5 4.5h3M12.5 7.5h3M12.5 10.5h3M12.5 13.5h3" stroke="#64b5f6" stroke-width="1.2"/><path d="M2 0.5V15M14 0.5V15" stroke="#64b5f6" stroke-width="1"/><path d="M3.5 13.5L12.5 2.5" stroke="#00897b" stroke-width="1.8"/></svg>
<div class="t " style="left:832px;top:104.2px;">Внешние ключи (0)</div>
<svg class="ic" style="left:951.5px;top:103px" width="16" height="16" viewBox="0 0 16 16"><circle cx="8" cy="8" r="8" fill="#c8e6c9"/><path d="M4.3 8.3l2.5 2.5 5-5" fill="none" stroke="#43a047" stroke-width="1.8"/></svg>
<div class="t " style="left:974px;top:104.2px;">Проверить ограничения (0)</div>
<svg class="ic" style="left:1137px;top:102px" width="17" height="17" viewBox="0 0 17 17"><circle cx="8.5" cy="8.5" r="8.2" fill="#00bcd4"/><path d="M8.5 8.5V0.3A8.2 8.2 0 0 1 16.7 8.5Z" fill="#448aff"/><path d="M8.5 8.5H16.7A8.2 8.2 0 0 1 14.3 14.3Z" fill="#3f51b5"/></svg>
<div class="t " style="left:1160px;top:104.2px;">Партиции</div>
<svg class="ic" style="left:1227px;top:102px" width="16" height="16" viewBox="0 0 16 16"><path d="M4.5 4L1 8L4.5 12M11.5 4L15 8L11.5 12" fill="none" stroke="#3f51b5" stroke-width="1.5"/><path d="M9.6 2.5L6.4 13.5" stroke="#42a5f5" stroke-width="1.4"/></svg>
<div class="t " style="left:1249px;top:104.2px;">Код <span style="letter-spacing:-1.3px">CREATE</span></div>
<svg class="ic" style="left:1325px;top:102px" width="16" height="16" viewBox="0 0 16 16"><path d="M4.5 4L1 8L4.5 12M11.5 4L15 8L11.5 12" fill="none" stroke="#3f51b5" stroke-width="1.5"/><path d="M9.6 2.5L6.4 13.5" stroke="#42a5f5" stroke-width="1.4"/></svg>
<div class="t " style="left:1347px;top:104.2px;">Код <span style="letter-spacing:-1.1px">ALTER</span></div>
<div class="t " style="left:549.5px;top:131px;">Имя:</div>
<div class="r" style="left:641px;top:127.5px;width:1267px;height:22px;background:#fff;border:1px solid #ececec;border-bottom:2px solid #005fb8;border-radius:2px 2px 0 0"></div>
<div class="t " style="left:644.5px;top:131px;">RepoGroup</div>
<div class="t " style="left:549.5px;top:158.5px;">Комментарий:</div>
<div class="r" style="left:641px;top:154.5px;width:1268px;height:77px;background:#fff;border:1px solid #ececec;border-bottom:1px solid #8a8a8a;border-radius:2px"></div>
<div class="r" style="left:1890px;top:156px;width:16px;height:74px;background:#f0f0f0"></div>
<svg class="ic" style="left:1893px;top:164px" width="10" height="7" viewBox="0 0 10 7"><path d="M0.5 6.5L5 1L9.5 6.5Z" fill="#8a8a8a"/></svg>
<svg class="ic" style="left:1893px;top:218px" width="10" height="7" viewBox="0 0 10 7"><path d="M0.5 0.5L5 6L9.5 0.5Z" fill="#8a8a8a"/></svg>
<div class="r" style="left:535px;top:246px;width:1378px;height:10px;background:#f0f0f0"></div>
<div class="t " style="left:541.5px;top:260px;">Столбцы:</div>
<svg class="ic" style="left:644px;top:259px" width="16" height="16" viewBox="0 0 16 16"><circle cx="8" cy="8" r="7.8" fill="#4caf50"/><path d="M8 3.8v8.4M3.8 8h8.4" stroke="#fff" stroke-width="2.2"/></svg>
<div class="t " style="left:663.7px;top:260px;">Добавить</div>
<svg class="ic" style="left:723px;top:259px" width="16" height="16" viewBox="0 0 16 16"><circle cx="8" cy="8" r="7.8" fill="#616161"/><path d="M5.2 5.2l5.6 5.6M10.8 5.2l-5.6 5.6" stroke="#fff" stroke-width="1.8"/></svg>
<div class="t " style="left:742.5px;top:260px;color:#8c8c8c">Удалить</div>
<svg class="ic" style="left:802px;top:262px" width="16" height="9" viewBox="0 0 16 9"><path d="M0.5 8.5L8 0.5L15.5 8.5Z" fill="#8f8f8f"/></svg>
<div class="t " style="left:822.5px;top:260px;color:#8c8c8c">Вверх</div>
<svg class="ic" style="left:881px;top:262px" width="16" height="9" viewBox="0 0 16 9"><path d="M0.5 0.5L8 8.5L15.5 0.5Z" fill="#8f8f8f"/></svg>
<div class="t " style="left:901px;top:260px;color:#8c8c8c">Вниз</div>
<div class="r" style="left:541px;top:281px;width:1371px;height:551px;background:#fff;border:1px solid #e2e2e2;border-bottom:1px solid #8a8a8a"></div>
<div class="r" style="left:543px;top:305px;width:59.5px;height:104.5px;background:#f0f0f0"></div>
<div class="r" style="left:1883.5px;top:305px;width:28px;height:104.5px;background:#f0f0f0"></div>
<div class="r" style="left:602.5px;top:283px;width:1px;height:22px;background:#e6e6e6"></div>
<div class="r" style="left:702.5px;top:283px;width:1px;height:22px;background:#e6e6e6"></div>
<div class="r" style="left:870.6px;top:283px;width:1px;height:22px;background:#e6e6e6"></div>
<div class="r" style="left:960px;top:283px;width:1px;height:22px;background:#e6e6e6"></div>
<div class="r" style="left:1020.5px;top:283px;width:1px;height:22px;background:#e6e6e6"></div>
<div class="r" style="left:1085.6px;top:283px;width:1px;height:22px;background:#e6e6e6"></div>
<div class="r" style="left:1135.3px;top:283px;width:1px;height:22px;background:#e6e6e6"></div>
<div class="r" style="left:1401px;top:283px;width:1px;height:22px;background:#e6e6e6"></div>
<div class="r" style="left:1531.7px;top:283px;width:1px;height:22px;background:#e6e6e6"></div>
<div class="r" style="left:1683px;top:283px;width:1px;height:22px;background:#e6e6e6"></div>
<div class="r" style="left:1783px;top:283px;width:1px;height:22px;background:#e6e6e6"></div>
<div class="r" style="left:1883px;top:283px;width:1px;height:22px;background:#e6e6e6"></div>
<div class="r" style="left:602.5px;top:305px;width:1px;height:104.5px;background:#ececec"></div>
<div class="r" style="left:702.5px;top:305px;width:1px;height:104.5px;background:#ececec"></div>
<div class="r" style="left:870.6px;top:305px;width:1px;height:104.5px;background:#ececec"></div>
<div class="r" style="left:960px;top:305px;width:1px;height:104.5px;background:#ececec"></div>
<div class="r" style="left:1020.5px;top:305px;width:1px;height:104.5px;background:#ececec"></div>
<div class="r" style="left:1085.6px;top:305px;width:1px;height:104.5px;background:#ececec"></div>
<div class="r" style="left:1135.3px;top:305px;width:1px;height:104.5px;background:#ececec"></div>
<div class="r" style="left:1401px;top:305px;width:1px;height:104.5px;background:#ececec"></div>
<div class="r" style="left:1531.7px;top:305px;width:1px;height:104.5px;background:#ececec"></div>
<div class="r" style="left:1683px;top:305px;width:1px;height:104.5px;background:#ececec"></div>
<div class="r" style="left:1783px;top:305px;width:1px;height:104.5px;background:#ececec"></div>
<div class="r" style="left:602.5px;top:325px;width:1281px;height:1px;background:#e8e8e8"></div>
<div class="r" style="left:602.5px;top:346px;width:1281px;height:1px;background:#e8e8e8"></div>
<div class="r" style="left:602.5px;top:367px;width:1281px;height:1px;background:#e8e8e8"></div>
<div class="r" style="left:602.5px;top:388px;width:1281px;height:1px;background:#e8e8e8"></div>
<div class="r" style="left:602.5px;top:409px;width:1281px;height:1px;background:#e8e8e8"></div>
<div class="t" style="left:0;top:287px;width:597px;text-align:right">#</div>
<div class="t " style="left:609.4px;top:287px;">Имя</div>
<div class="t " style="left:709px;top:287px;">Тип данных</div>
<div class="t " style="left:877px;top:287px;">Длина/Знач...</div>
<div class="t " style="left:968px;top:287px;">Безна...</div>
<div class="t " style="left:1028px;top:287px;">Разреш...</div>
<div class="t " style="left:1091.6px;top:287px;">Zerofill</div>
<div class="t " style="left:1143px;top:287px;">По умолчанию</div>
<div class="t " style="left:1408px;top:287px;">Комментарий</div>
<div class="t " style="left:1538.8px;top:287px;">Сопоставление</div>
<div class="t " style="left:1690px;top:287px;">Выражение</div>
<div class="t " style="left:1790px;top:287px;">Виртуальность</div>
<div style="position:absolute;left:1890px;top:287px;width:22px;height:16px;overflow:hidden"><div class="t" style="position:relative;letter-spacing:-0.6px">SRID</div></div>
<svg class="ic" style="left:545px;top:307px" width="12" height="17" viewBox="0 0 12 17"><path d="M2.2 0.5h7.6a1.7 1.7 0 0 1 1.7 1.7v3.3a2.8 2.8 0 0 1-2.8 2.8H8V13l1.2 .8L8 14.6v.6l-1.6 1.3H4V8.3h-.7A2.8 2.8 0 0 1 .5 5.5V2.2A1.7 1.7 0 0 1 2.2 .5z" fill="#ffa000"/><rect x="3.6" y="2" width="4.8" height="1.6" rx="0.6" fill="#fff" opacity="0.9"/></svg>
<div class="t" style="left:0;top:307.7px;width:597px;text-align:right;color:#6e6e6e">1</div>
<div class="t b" style="left:611px;top:307.7px;">id</div>
<div class="t " style="left:711.5px;top:307.7px;color:#0000f0;font-weight:bold">BIGINT</div>
<div class="t b" style="left:879px;top:307.7px;">20</div>
<svg class="ic" style="left:983.5px;top:307.5px" width="15" height="15" viewBox="0 0 15 15"><rect x="1" y="1" width="13" height="13" rx="2.6" fill="#e3f2fd" stroke="#2196f3" stroke-width="2"/></svg>
<svg class="ic" style="left:1045.5px;top:307.5px" width="15" height="15" viewBox="0 0 15 15"><rect x="1" y="1" width="13" height="13" rx="2.6" fill="#eeeeee" stroke="#757575" stroke-width="2"/></svg>
<svg class="ic" style="left:1103.5px;top:307.5px" width="15" height="15" viewBox="0 0 15 15"><rect x="1" y="1" width="13" height="13" rx="2.6" fill="#e3f2fd" stroke="#2196f3" stroke-width="2"/></svg>
<div class="t " style="left:1144px;top:307.7px;color:#0000f0;font-weight:bold;letter-spacing:-0.5px">AUTO_INCREMENT</div>
<svg class="ic" style="left:545px;top:328px" width="12" height="17" viewBox="0 0 12 17"><path d="M2.2 0.5h7.6a1.7 1.7 0 0 1 1.7 1.7v3.3a2.8 2.8 0 0 1-2.8 2.8H8V13l1.2 .8L8 14.6v.6l-1.6 1.3H4V8.3h-.7A2.8 2.8 0 0 1 .5 5.5V2.2A1.7 1.7 0 0 1 2.2 .5z" fill="#c62838"/><rect x="3.6" y="2" width="4.8" height="1.6" rx="0.6" fill="#fff" opacity="0.9"/></svg>
<svg class="ic" style="left:561px;top:328px" width="12" height="17" viewBox="0 0 12 17"><path d="M2.2 0.5h7.6a1.7 1.7 0 0 1 1.7 1.7v3.3a2.8 2.8 0 0 1-2.8 2.8H8V13l1.2 .8L8 14.6v.6l-1.6 1.3H4V8.3h-.7A2.8 2.8 0 0 1 .5 5.5V2.2A1.7 1.7 0 0 1 2.2 .5z" fill="#43b000"/><rect x="3.6" y="2" width="4.8" height="1.6" rx="0.6" fill="#fff" opacity="0.9"/></svg>
<div class="t" style="left:0;top:328.7px;width:597px;text-align:right;color:#6e6e6e">2</div>
<div class="t " style="left:611px;top:328.7px;">repo_id</div>
<div class="t " style="left:711.5px;top:328.7px;color:#0a8a0a">CHAR</div>
<div class="t " style="left:879px;top:328.7px;">37</div>
<svg class="ic" style="left:983.5px;top:328.5px" width="15" height="15" viewBox="0 0 15 15"><rect x="1" y="1" width="13" height="13" rx="2.6" fill="#eeeeee" stroke="#757575" stroke-width="2"/></svg>
<svg class="ic" style="left:1045.5px;top:328.5px" width="15" height="15" viewBox="0 0 15 15"><rect x="1" y="1" width="13" height="13" rx="2.6" fill="#f1f8e9" stroke="#8bc34a" stroke-width="2"/><path d="M4.2 7.6l2.2 2.2 4.4-4.6" fill="none" stroke="#3d8b24" stroke-width="1.7"/></svg>
<svg class="ic" style="left:1103.5px;top:328.5px" width="15" height="15" viewBox="0 0 15 15"><rect x="1" y="1" width="13" height="13" rx="2.6" fill="#eeeeee" stroke="#757575" stroke-width="2"/></svg>
<div class="t " style="left:1144px;top:328.7px;color:#55b955">NULL</div>
<div class="t " style="left:1540px;top:328.7px;letter-spacing:-0.3px">utf8mb3_uca1400_ai_ci</div>
<svg class="ic" style="left:545px;top:349px" width="12" height="17" viewBox="0 0 12 17"><path d="M2.2 0.5h7.6a1.7 1.7 0 0 1 1.7 1.7v3.3a2.8 2.8 0 0 1-2.8 2.8H8V13l1.2 .8L8 14.6v.6l-1.6 1.3H4V8.3h-.7A2.8 2.8 0 0 1 .5 5.5V2.2A1.7 1.7 0 0 1 2.2 .5z" fill="#c62838"/><rect x="3.6" y="2" width="4.8" height="1.6" rx="0.6" fill="#fff" opacity="0.9"/></svg>
<div class="t" style="left:0;top:349.7px;width:597px;text-align:right;color:#6e6e6e">3</div>
<div class="t " style="left:611px;top:349.7px;">group_id</div>
<div class="t " style="left:711.5px;top:349.7px;color:#1515e0">INT</div>
<div class="t " style="left:879px;top:349.7px;">11</div>
<svg class="ic" style="left:983.5px;top:349.5px" width="15" height="15" viewBox="0 0 15 15"><rect x="1" y="1" width="13" height="13" rx="2.6" fill="#e3f2fd" stroke="#2196f3" stroke-width="2"/></svg>
<svg class="ic" style="left:1045.5px;top:349.5px" width="15" height="15" viewBox="0 0 15 15"><rect x="1" y="1" width="13" height="13" rx="2.6" fill="#f1f8e9" stroke="#8bc34a" stroke-width="2"/><path d="M4.2 7.6l2.2 2.2 4.4-4.6" fill="none" stroke="#3d8b24" stroke-width="1.7"/></svg>
<svg class="ic" style="left:1103.5px;top:349.5px" width="15" height="15" viewBox="0 0 15 15"><rect x="1" y="1" width="13" height="13" rx="2.6" fill="#e3f2fd" stroke="#2196f3" stroke-width="2"/></svg>
<div class="t " style="left:1144px;top:349.7px;color:#aaa6ea">NULL</div>
<svg class="ic" style="left:545px;top:370px" width="12" height="17" viewBox="0 0 12 17"><path d="M2.2 0.5h7.6a1.7 1.7 0 0 1 1.7 1.7v3.3a2.8 2.8 0 0 1-2.8 2.8H8V13l1.2 .8L8 14.6v.6l-1.6 1.3H4V8.3h-.7A2.8 2.8 0 0 1 .5 5.5V2.2A1.7 1.7 0 0 1 2.2 .5z" fill="#43b000"/><rect x="3.6" y="2" width="4.8" height="1.6" rx="0.6" fill="#fff" opacity="0.9"/></svg>
<div class="t" style="left:0;top:370.7px;width:597px;text-align:right;color:#6e6e6e">4</div>
<div class="t " style="left:611px;top:370.7px;">user_name</div>
<div class="t " style="left:711.5px;top:370.7px;color:#0a8a0a">VARCHAR</div>
<div class="t " style="left:879px;top:370.7px;">255</div>
<svg class="ic" style="left:983.5px;top:370.5px" width="15" height="15" viewBox="0 0 15 15"><rect x="1" y="1" width="13" height="13" rx="2.6" fill="#eeeeee" stroke="#757575" stroke-width="2"/></svg>
<svg class="ic" style="left:1045.5px;top:370.5px" width="15" height="15" viewBox="0 0 15 15"><rect x="1" y="1" width="13" height="13" rx="2.6" fill="#f1f8e9" stroke="#8bc34a" stroke-width="2"/><path d="M4.2 7.6l2.2 2.2 4.4-4.6" fill="none" stroke="#3d8b24" stroke-width="1.7"/></svg>
<svg class="ic" style="left:1103.5px;top:370.5px" width="15" height="15" viewBox="0 0 15 15"><rect x="1" y="1" width="13" height="13" rx="2.6" fill="#eeeeee" stroke="#757575" stroke-width="2"/></svg>
<div class="t " style="left:1144px;top:370.7px;color:#55b955">NULL</div>
<div class="t " style="left:1540px;top:370.7px;letter-spacing:-0.3px">utf8mb3_uca1400_ai_ci</div>
<div class="t" style="left:0;top:391.7px;width:597px;text-align:right;color:#6e6e6e">5</div>
<div class="t " style="left:611px;top:391.7px;">permission</div>
<div class="t " style="left:711.5px;top:391.7px;color:#0a8a0a">CHAR</div>
<div class="t " style="left:879px;top:391.7px;">15</div>
<svg class="ic" style="left:983.5px;top:391.5px" width="15" height="15" viewBox="0 0 15 15"><rect x="1" y="1" width="13" height="13" rx="2.6" fill="#eeeeee" stroke="#757575" stroke-width="2"/></svg>
<svg class="ic" style="left:1045.5px;top:391.5px" width="15" height="15" viewBox="0 0 15 15"><rect x="1" y="1" width="13" height="13" rx="2.6" fill="#f1f8e9" stroke="#8bc34a" stroke-width="2"/><path d="M4.2 7.6l2.2 2.2 4.4-4.6" fill="none" stroke="#3d8b24" stroke-width="1.7"/></svg>
<svg class="ic" style="left:1103.5px;top:391.5px" width="15" height="15" viewBox="0 0 15 15"><rect x="1" y="1" width="13" height="13" rx="2.6" fill="#eeeeee" stroke="#757575" stroke-width="2"/></svg>
<div class="t " style="left:1144px;top:391.7px;color:#55b955">NULL</div>
<div class="t " style="left:1540px;top:391.7px;letter-spacing:-0.3px">utf8mb3_uca1400_ai_ci</div>
<div class="r" style="left:542px;top:814px;width:1369px;height:17px;background:#f0f0f0"></div>
<div class="r" style="left:560px;top:821px;width:1224px;height:2.5px;background:#858585;border-radius:1px"></div>
<div class="r" style="left:542px;top:837px;width:73px;height:23px;background:#fdfdfd;border:1px solid #d5d5d5;border-bottom:1px solid #b8b8b8;border-radius:4px"></div>
<div class="t " style="left:554px;top:842px;">Помощь</div>
<div class="r" style="left:623px;top:837px;width:73px;height:23px;background:#fdfdfd;border:1px solid #d5d5d5;border-bottom:1px solid #b8b8b8;border-radius:4px"></div>
<div class="t " style="left:638.5px;top:842px;">Отмена</div>
<div class="r" style="left:704px;top:837px;width:73px;height:23px;background:#fdfdfd;border:1px solid #0067c0;border-bottom:1px solid #0067c0;border-radius:4px"></div>
<div class="t " style="left:711.5px;top:842px;">Сохранить</div>
<div class="r" style="left:0px;top:868px;width:1920px;height:5px;background:#f0f0f0"></div>
<div class="r" style="left:0px;top:873px;width:1913px;height:140px;background:#fff;border-top:1px solid #e4e4e4;border-left:1px solid #e4e4e4;border-bottom:1px solid #8a8a8a"></div>
<div class="r" style="left:1px;top:874px;width:48px;height:137px;background:#f0f0f0"></div>
<div class="r" style="left:1901px;top:874px;width:12px;height:137px;background:#f0f0f0"></div>
<div class="r" style="left:1909px;top:977px;width:2px;height:16px;background:#858585;border-radius:1px"></div>
<div class="t mono" style="left:4.5px;top:875.5px;color:#6e6e6e">1278</div>
<div class="t mono" style="left:53.5px;top:875.5px;white-space:pre"><span class="kw">SELECT</span> <span class="kw">CONSTRAINT_NAME</span><span class="kw">,</span> <span class="id">CHECK_CLAUSE</span> <span class="kw">FROM</span> <span class="id">`information_schema`</span><span class="kw">.</span><span class="id">`CHECK_CONSTRAINTS`</span> <span class="kw">WHERE</span> <span class="kw">CONSTRAINT_SCHEMA</span><span class="kw">=</span><span class="st">'seafile-db'</span> <span class="kw">AND</span> <span class="kw">TABLE_NAME</span><span class="kw">=</span><span class="st">'RepoFileCount'</span><span class="kw">;</span></div>
<div class="t mono" style="left:4.5px;top:889.5px;color:#6e6e6e">1279</div>
<div class="t mono" style="left:53.5px;top:889.5px;white-space:pre"><span class="cm">/* Открытие сеанса «NAS» */</span></div>
<div class="t mono" style="left:4.5px;top:903.5px;color:#6e6e6e">1280</div>
<div class="t mono" style="left:53.5px;top:903.5px;white-space:pre"><span class="kw">SHOW</span> <span class="kw">CREATE</span> <span class="kw">TABLE</span> <span class="id">`seafile-db`</span><span class="kw">.</span><span class="id">`RepoFileCount`</span><span class="kw">;</span></div>
<div class="t mono" style="left:4.5px;top:917.5px;color:#6e6e6e">1281</div>
<div class="t mono" style="left:53.5px;top:917.5px;white-space:pre"><span class="kw">SELECT</span> <span class="kw">*</span> <span class="kw">FROM</span> <span class="id">`information_schema`</span><span class="kw">.</span><span class="id">`COLUMNS`</span> <span class="kw">WHERE</span> <span class="id">TABLE_SCHEMA</span><span class="kw">=</span><span class="st">'seafile-db'</span> <span class="kw">AND</span> <span class="kw">TABLE_NAME</span><span class="kw">=</span><span class="st">'repogroup'</span> <span class="kw">ORDER</span> <span class="kw">BY</span> <span class="id">ORDINAL_POSITION</span><span class="kw">;</span></div>
<div class="t mono" style="left:4.5px;top:931.5px;color:#6e6e6e">1282</div>
<div class="t mono" style="left:53.5px;top:931.5px;white-space:pre"><span class="kw">SHOW</span> <span class="kw">INDEXES</span> <span class="kw">FROM</span> <span class="id">`repogroup`</span> <span class="kw">FROM</span> <span class="id">`seafile-db`</span><span class="kw">;</span></div>
<div class="t mono" style="left:4.5px;top:945.5px;color:#6e6e6e">1283</div>
<div class="t mono" style="left:53.5px;top:945.5px;white-space:pre"><span class="kw">SELECT</span> <span class="kw">*</span> <span class="kw">FROM</span> <span class="id">information_schema</span><span class="kw">.</span><span class="id">REFERENTIAL_CONSTRAINTS</span> <span class="kw">WHERE</span>   <span class="kw">CONSTRAINT_SCHEMA</span><span class="kw">=</span><span class="st">'seafile-db'</span>   <span class="kw">AND</span> <span class="kw">TABLE_NAME</span><span class="kw">=</span><span class="st">'repogroup'</span>   <span class="kw">AND</span> <span class="id">REFERENCED_TABLE_NAME</span> <span class="kw">IS</span> <span class="kw">NOT</span> <span class="kw">NULL</span><span class="kw">;</span></div>
<div class="t mono" style="left:4.5px;top:959.5px;color:#6e6e6e">1284</div>
<div class="t mono" style="left:53.5px;top:959.5px;white-space:pre"><span class="kw">SELECT</span> <span class="kw">*</span> <span class="kw">FROM</span> <span class="id">information_schema</span><span class="kw">.</span><span class="id">KEY_COLUMN_USAGE</span> <span class="kw">WHERE</span>   <span class="id">TABLE_SCHEMA</span><span class="kw">=</span><span class="st">'seafile-db'</span>   <span class="kw">AND</span> <span class="kw">TABLE_NAME</span><span class="kw">=</span><span class="st">'repogroup'</span>   <span class="kw">AND</span> <span class="id">REFERENCED_TABLE_NAME</span> <span class="kw">IS</span> <span class="kw">NOT</span> <span class="kw">NULL</span><span class="kw">;</span></div>
<div class="t mono" style="left:4.5px;top:973.5px;color:#6e6e6e">1285</div>
<div class="t mono" style="left:53.5px;top:973.5px;white-space:pre"><span class="kw">SHOW</span> <span class="kw">CREATE</span> <span class="kw">TABLE</span> <span class="id">`seafile-db`</span><span class="kw">.</span><span class="id">`repogroup`</span><span class="kw">;</span></div>
<div class="t mono" style="left:4.5px;top:987.5px;color:#6e6e6e">1286</div>
<div class="t mono" style="left:53.5px;top:987.5px;white-space:pre"><span class="kw">SELECT</span> <span class="kw">CONSTRAINT_NAME</span><span class="kw">,</span> <span class="id">CHECK_CLAUSE</span> <span class="kw">FROM</span> <span class="id">`information_schema`</span><span class="kw">.</span><span class="id">`CHECK_CONSTRAINTS`</span> <span class="kw">WHERE</span> <span class="kw">CONSTRAINT_SCHEMA</span><span class="kw">=</span><span class="st">'seafile-db'</span> <span class="kw">AND</span> <span class="kw">TABLE_NAME</span><span class="kw">=</span><span class="st">'repogroup'</span><span class="kw">;</span></div>
<div class="r" style="left:0px;top:1013px;width:1920px;height:19px;background:#f0f0f0"></div>
<div class="r" style="left:840px;top:1014px;width:1px;height:18px;background:#d6d6d6"></div>
<div class="r" style="left:972px;top:1014px;width:1px;height:18px;background:#d6d6d6"></div>
<div class="r" style="left:1153px;top:1014px;width:1px;height:18px;background:#d6d6d6"></div>
<div class="r" style="left:1327px;top:1014px;width:1px;height:18px;background:#d6d6d6"></div>
<div class="r" style="left:1499px;top:1014px;width:1px;height:18px;background:#d6d6d6"></div>
<div class="r" style="left:1658px;top:1014px;width:1px;height:18px;background:#d6d6d6"></div>
<svg class="ic" style="left:976px;top:1016px" width="16" height="16" viewBox="0 0 16 16"><circle cx="8" cy="8" r="7" fill="#fff" stroke="#26a6c0" stroke-width="1.8"/><path d="M8 3.5V8.3L10.6 10.2" fill="none" stroke="#37474f" stroke-width="1.4"/></svg>
<div class="t " style="left:995px;top:1017px;letter-spacing:-0.2px">Подключено: 00:30 h</div>
<svg class="ic" style="left:1157px;top:1017px" width="17" height="14" viewBox="0 0 17 14"><path d="M0.5 12.5C3 12 4 9.5 6.5 6.5 9 3.5 12 2 16 2.5L14 4.5 15.5 6.5C12.5 6 11 8 10.5 12L8.5 10.5 6 13.5Z" fill="#c0765a"/><path d="M1 13C4 12.5 6.5 10 9 7" stroke="#37474f" stroke-width="0.9" fill="none"/></svg>
<div class="t " style="left:1175px;top:1017px;letter-spacing:-0.2px">MariaDB 11.8.5</div>
<div class="t " style="left:1331px;top:1017px;letter-spacing:-0.2px">Время работы: 00:31 h</div>
<svg class="ic" style="left:1504px;top:1016px" width="16" height="16" viewBox="0 0 16 16"><circle cx="8" cy="8" r="7" fill="#fff" stroke="#26a6c0" stroke-width="1.8"/><path d="M8 3.5V8.3L10.6 10.2" fill="none" stroke="#37474f" stroke-width="1.4"/></svg>
<div class="t " style="left:1521.7px;top:1017px;letter-spacing:-0.2px">Серверное время: 12:13</div>
<svg class="ic" style="left:1662px;top:1016px" width="16" height="16" viewBox="0 0 16 16"><circle cx="8" cy="8" r="7" fill="none" stroke="#ab47bc" stroke-width="1.6"/></svg>
<div class="t " style="left:1680px;top:1017px;letter-spacing:-0.2px">Ожидание.</div>
</body></html>
